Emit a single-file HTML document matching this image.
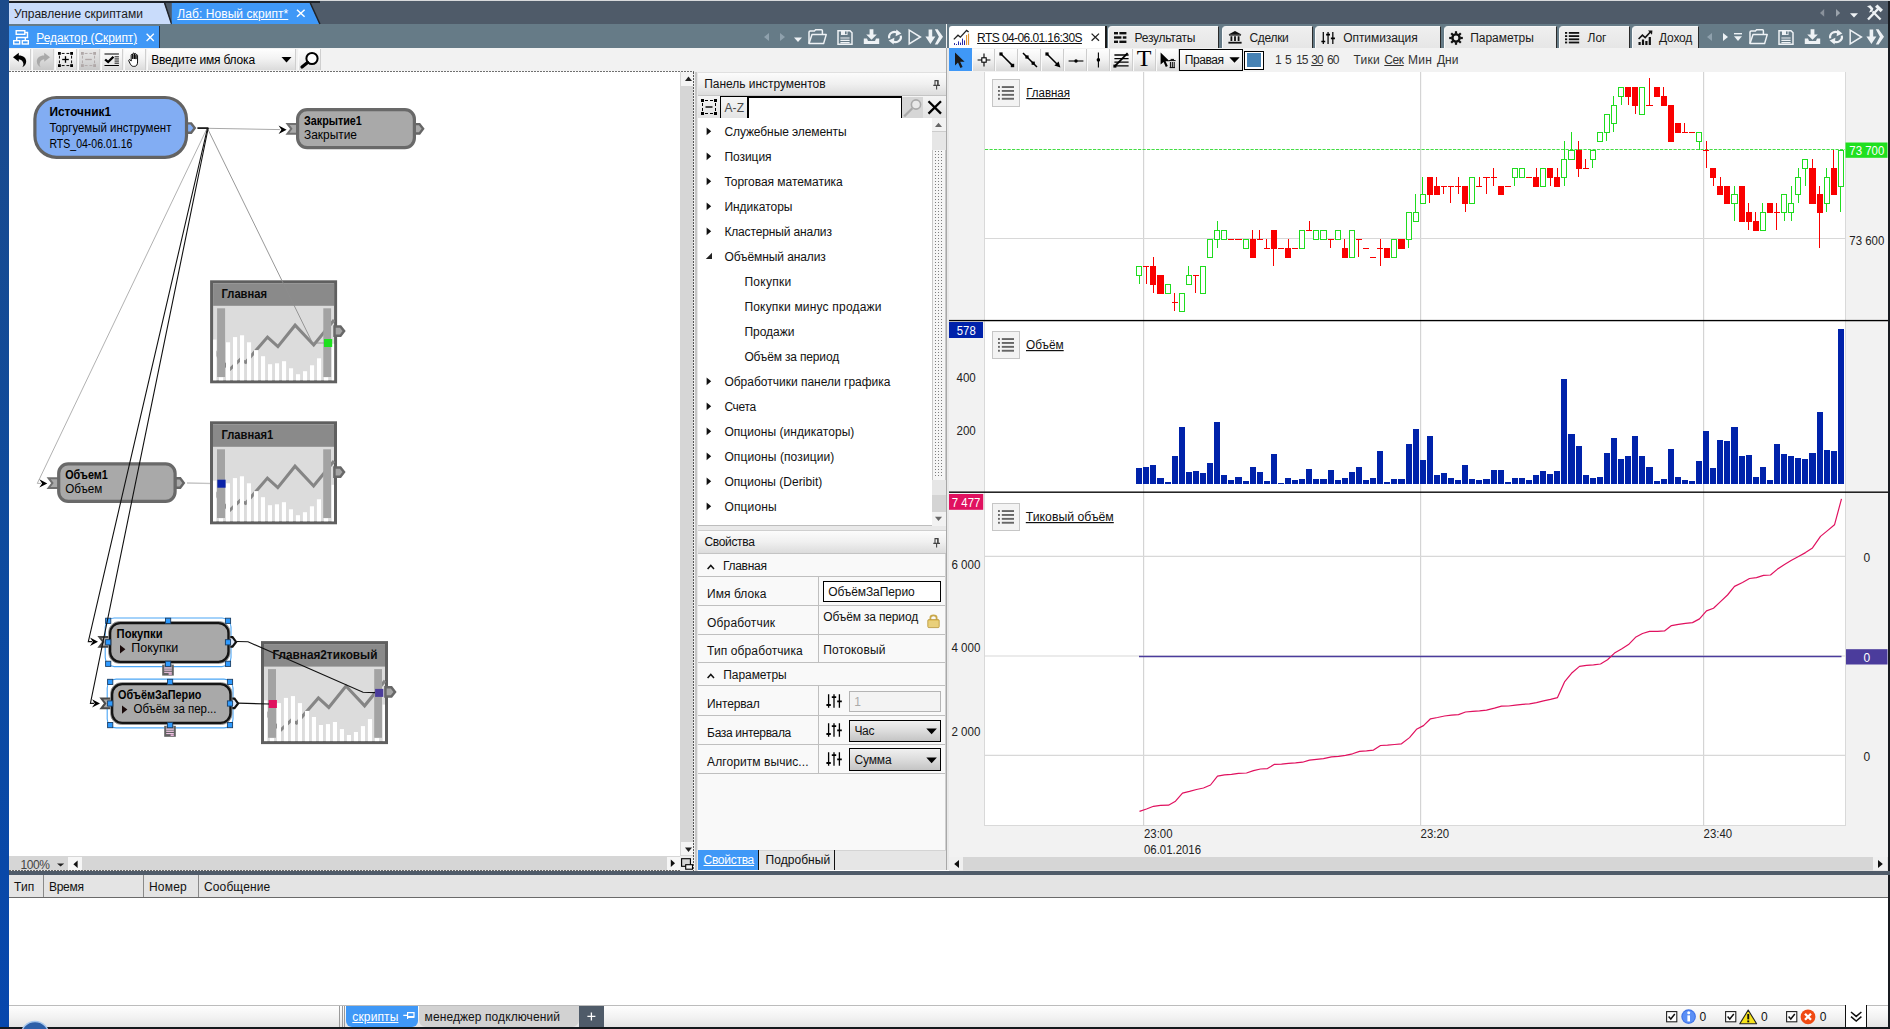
<!DOCTYPE html>
<html lang="ru"><head><meta charset="utf-8"><title>Лаб: Новый скрипт</title>
<style>
*{box-sizing:border-box;margin:0;padding:0}
html,body{width:1890px;height:1029px;overflow:hidden;background:#fff}
body{position:relative;font-family:"Liberation Sans",sans-serif;font-size:12px;color:#000}
div{position:absolute}
svg{position:absolute;overflow:visible}
svg text{font-family:"Liberation Sans",sans-serif}
.t{white-space:pre}
</style></head>
<body>
<div style="left:0px;top:0px;width:9px;height:1029px;background:linear-gradient(#1c4b8b,#0c4aa0 60%,#0747ad)"></div>
<div style="left:9px;top:0px;width:1881px;height:24px;background:#4f5b69"></div>
<div style="left:9px;top:0px;width:1881px;height:1px;background:#d8dadc"></div>
<div style="left:9px;top:1px;width:311px;height:2px;background:#1e2228"></div>
<div style="left:9px;top:24px;width:1881px;height:24px;background:#667b87"></div>
<div style="left:9px;top:48px;width:1881px;height:24px;background:#f2f2f2"></div>
<svg style="left:0;top:0" width="400" height="30"><polygon points="9,3 164.3,3 171.3,24 9,24" fill="#c9dcfb"/><path d="M164.6 3 L171.6 24" stroke="#20242a" stroke-width="1.5"/><polygon points="171.8,3 310,3 319.6,24 171.8,24" fill="#3f98f7"/><path d="M310.3 3 L319.9 24" stroke="#20242a" stroke-width="1.5"/></svg>
<div class="t" style="left:14px;top:7px;line-height:14px;height:14px;color:#1a1a1a;letter-spacing:0.042px;">Управление скриптами</div>
<div class="t" style="left:177.3px;top:7px;line-height:14px;height:14px;color:#fff;text-decoration:underline;letter-spacing:0.069px;">Лаб: Новый скрипт*</div>
<svg style="left:296px;top:9px" width="10" height="9"><path d="M1 0.8 L8.6 7.8 M8.6 0.8 L1 7.8" stroke="#fff" stroke-width="1.5" fill="none"/></svg>
<div style="left:9px;top:25.7px;width:151px;height:22.3px;background:#3f98f7;border-right:1px solid #2a3340"></div>
<svg style="left:13px;top:30px" width="16" height="15"><rect x="3.2" y="0.7" width="8.6" height="3.6" fill="none" stroke="#fff" stroke-width="1.4"/><rect x="0.7" y="10.7" width="6" height="3.3" fill="none" stroke="#fff" stroke-width="1.4"/><rect x="9.3" y="10.7" width="6" height="3.3" fill="none" stroke="#fff" stroke-width="1.4"/><path d="M12 2.5 H14.5 V7.5 H3.7 V10.5 M12.3 7.5 V10.5" stroke="#fff" stroke-width="1.4" fill="none"/></svg>
<div class="t" style="left:36.3px;top:31px;line-height:14px;height:14px;color:#fff;text-decoration:underline;letter-spacing:-0.081px;">Редактор (Скрипт)</div>
<svg style="left:146px;top:33px" width="9" height="9"><path d="M0.6 0.8 L7.8 8 M7.8 0.8 L0.6 8" stroke="#fff" stroke-width="1.3" fill="none"/></svg>
<div style="left:9px;top:49px;width:22px;height:21px;background:linear-gradient(#fefefe,#f3f3f3 45%,#dbdbdb);border-right:1px solid #cfcfcf;border-left:1px solid #fafafa"></div>
<div style="left:32px;top:49px;width:22px;height:21px;background:linear-gradient(#e8e8e8,#dcdcdc 45%,#c8c8c8);border-right:1px solid #cfcfcf;border-left:1px solid #fafafa"></div>
<div style="left:55px;top:49px;width:22px;height:21px;background:linear-gradient(#fefefe,#f3f3f3 45%,#dbdbdb);border-right:1px solid #cfcfcf;border-left:1px solid #fafafa"></div>
<div style="left:78px;top:49px;width:22px;height:21px;background:linear-gradient(#e8e8e8,#dcdcdc 45%,#c8c8c8);border-right:1px solid #cfcfcf;border-left:1px solid #fafafa"></div>
<div style="left:101px;top:49px;width:22px;height:21px;background:linear-gradient(#fefefe,#f3f3f3 45%,#dbdbdb);border-right:1px solid #cfcfcf;border-left:1px solid #fafafa"></div>
<div style="left:124px;top:49px;width:22px;height:21px;background:linear-gradient(#fefefe,#f3f3f3 45%,#dbdbdb);border-right:1px solid #cfcfcf;border-left:1px solid #fafafa"></div>
<div style="left:147px;top:49px;width:149px;height:21px;background:linear-gradient(#fefefe,#f3f3f3 45%,#dbdbdb);border-right:1px solid #cfcfcf;border-left:1px solid #fafafa"></div>
<div style="left:298px;top:49px;width:23px;height:21px;background:linear-gradient(#fefefe,#f3f3f3 45%,#dbdbdb);border-right:1px solid #cfcfcf;border-left:1px solid #fafafa"></div>
<div style="left:9px;top:71px;width:685px;height:1px;background:repeating-linear-gradient(90deg,#707070 0 2px,#fafafa 2px 3px)"></div>
<svg style="left:12px;top:52px" width="16" height="16" viewBox="0 0 16 16"><path d="M1 5.2 L6.8 0.8 V3.6 C11.5 3.6 14.2 6.2 14.2 9.6 C14.2 12.2 12.6 14.2 10.2 15.2 C11.3 13.8 11.6 12.6 11.3 11.2 C10.8 9 9.2 7.4 6.8 7.2 V9.8 Z" fill="#000"/></svg>
<svg style="left:35px;top:52px" width="16" height="16" viewBox="0 0 16 16"><path d="M15 5.2 L9.2 0.8 V3.6 C4.5 3.6 1.8 6.2 1.8 9.6 C1.8 12.2 3.4 14.2 5.8 15.2 C4.7 13.8 4.4 12.6 4.7 11.2 C5.2 9 6.8 7.4 9.2 7.2 V9.8 Z" fill="#a9a9a9"/></svg>
<svg style="left:58px;top:52px" width="15" height="15" viewBox="0 0 16 16" fill="#000"><rect x="0" y="0" width="3" height="3"/><rect x="13" y="0" width="3" height="3"/><rect x="0" y="13" width="3" height="3"/><rect x="13" y="13" width="3" height="3"/><rect x="4" y="1" width="3" height="1"/><rect x="9" y="1" width="3" height="1"/><rect x="4" y="14" width="3" height="1"/><rect x="9" y="14" width="3" height="1"/><rect x="1" y="4" width="1" height="3"/><rect x="1" y="9" width="1" height="3"/><rect x="14" y="4" width="1" height="3"/><rect x="14" y="9" width="1" height="3"/><rect x="4.5" y="7.3" width="7" height="1.4"/><rect x="7.3" y="4.5" width="1.4" height="7"/></svg>
<svg style="left:81px;top:52px" width="15" height="15" viewBox="0 0 16 16" fill="#b0a8a8"><rect x="0" y="0" width="3" height="3"/><rect x="13" y="0" width="3" height="3"/><rect x="0" y="13" width="3" height="3"/><rect x="13" y="13" width="3" height="3"/><rect x="4" y="1" width="3" height="1"/><rect x="9" y="1" width="3" height="1"/><rect x="4" y="14" width="3" height="1"/><rect x="9" y="14" width="3" height="1"/><rect x="1" y="4" width="1" height="3"/><rect x="1" y="9" width="1" height="3"/><rect x="14" y="4" width="1" height="3"/><rect x="14" y="9" width="1" height="3"/><rect x="4.5" y="7.3" width="7" height="1.4"/></svg>
<svg style="left:104px;top:52.8px" width="15.4" height="13.6" viewBox="0 0 16 16" preserveAspectRatio="none"><path d="M0.5 1.2 H15.5 M0.5 14.8 H15.5" stroke="#000" stroke-width="1.2"/><path d="M11 4.5 H15.5 M11 7 H15.5 M11 9.5 H15.5 M11 12 H15.5" stroke="#000" stroke-width="1"/><path d="M1.2 7.6 L4.3 10.6 L9.8 4.4" stroke="#000" stroke-width="2.4" fill="none"/></svg>
<svg style="left:128.4px;top:52.2px" width="12.4" height="15.6" viewBox="0 0 14 18" preserveAspectRatio="none"><path d="M3.6 10.5 V3.6 C3.6 2.4 5.4 2.4 5.4 3.6 V8 V2.2 C5.4 1 7.2 1 7.2 2.2 V8 V2.6 C7.2 1.4 9 1.4 9 2.6 V8.2 V4 C9 2.8 10.8 2.8 10.8 4 V11.5 C10.8 14.5 9.8 16.6 7 16.6 H6.2 C4.4 16.6 3.4 15.4 2.4 13.4 L0.9 10.2 C0.4 9 2 8.2 2.7 9.3 Z" fill="#fff" stroke="#000" stroke-width="1.1" stroke-linejoin="round"/></svg>
<div class="t" style="left:151.2px;top:53px;line-height:14px;height:14px;letter-spacing:-0.186px;">Введите имя блока</div>
<svg style="left:281px;top:56px" width="12" height="8"><polygon points="0.5,1 10.5,1 5.5,6.5" fill="#000"/></svg>
<svg style="left:300px;top:51px" width="20" height="18" viewBox="0 0 20 18"><circle cx="12" cy="7.5" r="5.6" fill="#fff" stroke="#000" stroke-width="2"/><path d="M7.6 11.4 L2 16" stroke="#000" stroke-width="3.2" stroke-linecap="round"/></svg>
<svg style="left:0;top:0" width="700" height="880" viewBox="0 0 700 880">
<path d="M208 128.3 L280 129.6" stroke="#a8a8a8" stroke-width="1" fill="none"/>
<path d="M207 128.5 L37.3 483.4 L41 483.4" stroke="#a8a8a8" stroke-width="0.9" fill="none"/>
<path d="M187 483 L218 483.6" stroke="#c4c4c4" stroke-width="1.4" fill="none"/>
<polygon points="186.2,123.4 191.2,123.4 194.79999999999998,128.1 191.2,132.8 186.2,132.8" fill="#82adf3" stroke="#666" stroke-width="2.4" stroke-linejoin="miter"/>
<rect x="34.90" y="97.50" width="151.60" height="59.80" rx="21.5" ry="21.5" fill="#82adf3" stroke="#636363" stroke-width="3.2"/>
<text x="49.4" y="116" font-size="12" fill="#000" font-weight="bold" textLength="61.6" lengthAdjust="spacingAndGlyphs">Источник1</text>
<text x="49.4" y="132" font-size="12" fill="#000" textLength="122" lengthAdjust="spacingAndGlyphs">Торгуемый инструмент</text>
<text x="49.4" y="148" font-size="12" fill="#000" textLength="83" lengthAdjust="spacingAndGlyphs">RTS_04-06.01.16</text>
<polygon points="286.6,129.7 278.6,125.49999999999999 281.40000000000003,129.7 278.6,133.89999999999998" fill="#000"/>
<polygon points="287.5,123.9 297.9,123.9 297.9,133.70000000000002 287.5,133.70000000000002 291.29999999999995,128.8" fill="#a9a9a9" stroke="#707070" stroke-width="2" stroke-linejoin="miter"/>
<polygon points="414.5,124.10000000000001 419.5,124.10000000000001 423.1,128.8 419.5,133.50000000000003 414.5,133.50000000000003" fill="#a9a9a9" stroke="#666" stroke-width="2.4" stroke-linejoin="miter"/>
<rect x="297.60" y="109.60" width="116.80" height="38.00" rx="9.5" ry="9.5" fill="#a9a9a9" stroke="#696969" stroke-width="3.2"/>
<text x="304" y="125" font-size="12" fill="#000" font-weight="bold" textLength="57.8" lengthAdjust="spacingAndGlyphs">Закрытие1</text>
<text x="304" y="139" font-size="12" fill="#000" textLength="53" lengthAdjust="spacingAndGlyphs">Закрытие</text>
<g transform="translate(210.1,280.3)"><rect x="1.5" y="1.5" width="124" height="100" fill="#dcdcdc" stroke="#5f5f5f" stroke-width="3"/><rect x="3" y="3" width="121" height="22.5" fill="#8a8a8a"/><polyline points="5,71 8,76 19.2,89.5 30.1,79.3 35.6,82 57.4,56.8 67.8,66.3 85,44.9 103.6,64.7 124,39.6" fill="none" stroke="#858585" stroke-width="3.1" stroke-linejoin="miter"/><g fill="#fff"><rect x="3" y="59.3" width="3.4" height="40.7"/><rect x="15.9" y="62" width="4.1" height="38.0"/><rect x="22.9" y="56.8" width="4.1" height="43.2"/><rect x="29.9" y="55" width="4.1" height="45.0"/><rect x="36.9" y="62" width="4.1" height="38.0"/><rect x="43.9" y="69.8" width="4.1" height="30.2"/><rect x="50.9" y="75.9" width="4.1" height="24.1"/><rect x="57.9" y="83.9" width="4.1" height="16.1"/><rect x="64.9" y="83" width="4.1" height="17.0"/><rect x="71.9" y="80.9" width="4.1" height="19.1"/><rect x="78.9" y="88" width="4.1" height="12.0"/><rect x="85.9" y="93.9" width="4.1" height="6.1"/><rect x="92.9" y="90.9" width="4.1" height="9.1"/><rect x="99.9" y="85" width="4.1" height="15.0"/><rect x="106.9" y="78" width="4.1" height="22.0"/><rect x="8.9" y="97" width="4.2" height="3"/><rect x="113.9" y="97" width="4.2" height="3"/><rect x="121.6" y="63.5" width="2.4" height="36.5"/></g><rect x="7" y="28" width="8" height="68.7" fill="#a3a3a3"/><rect x="113.2" y="28" width="7.8" height="68.7" fill="#a3a3a3"/><rect x="113.9" y="58.7" width="8.2" height="8" fill="#1fe01f"/><polygon points="124.4,46.15 130.4,46.15 134.0,50.8 130.4,55.45 124.4,55.45" fill="#a4a4a4" stroke="#686868" stroke-width="2.5" stroke-linejoin="miter"/></g><text x="221.5" y="298" font-size="12" fill="#0a0a0a" font-weight="bold" textLength="45.5" lengthAdjust="spacingAndGlyphs">Главная</text>
<path d="M207.5 128.5 L312.5 343 L324 343" stroke="#8c8c8c" stroke-width="0.9" fill="none"/>
<polygon points="47.3,483.4 39.3,479.2 42.099999999999994,483.4 39.3,487.59999999999997" fill="#000"/>
<polygon points="48.6,478.2 59,478.2 59,488.0 48.6,488.0 52.4,483.09999999999997" fill="#a9a9a9" stroke="#707070" stroke-width="2" stroke-linejoin="miter"/>
<polygon points="175.2,478.3 180.2,478.3 183.79999999999998,483.0 180.2,487.70000000000005 175.2,487.70000000000005" fill="#a9a9a9" stroke="#666" stroke-width="2.4" stroke-linejoin="miter"/>
<rect x="58.70" y="463.80" width="116.40" height="37.50" rx="9.5" ry="9.5" fill="#a9a9a9" stroke="#696969" stroke-width="3.2"/>
<text x="65.2" y="479" font-size="12" fill="#000" font-weight="bold" textLength="42.6" lengthAdjust="spacingAndGlyphs">Объем1</text>
<text x="65.2" y="493" font-size="12" fill="#000" textLength="37.2" lengthAdjust="spacingAndGlyphs">Объем</text>
<g transform="translate(210.0,421.3)"><rect x="1.5" y="1.5" width="124" height="100" fill="#dcdcdc" stroke="#5f5f5f" stroke-width="3"/><rect x="3" y="3" width="121" height="22.5" fill="#8a8a8a"/><polyline points="5,71 8,76 19.2,89.5 30.1,79.3 35.6,82 57.4,56.8 67.8,66.3 85,44.9 103.6,64.7 124,39.6" fill="none" stroke="#858585" stroke-width="3.1" stroke-linejoin="miter"/><g fill="#fff"><rect x="3" y="59.3" width="3.4" height="40.7"/><rect x="15.9" y="62" width="4.1" height="38.0"/><rect x="22.9" y="56.8" width="4.1" height="43.2"/><rect x="29.9" y="55" width="4.1" height="45.0"/><rect x="36.9" y="62" width="4.1" height="38.0"/><rect x="43.9" y="69.8" width="4.1" height="30.2"/><rect x="50.9" y="75.9" width="4.1" height="24.1"/><rect x="57.9" y="83.9" width="4.1" height="16.1"/><rect x="64.9" y="83" width="4.1" height="17.0"/><rect x="71.9" y="80.9" width="4.1" height="19.1"/><rect x="78.9" y="88" width="4.1" height="12.0"/><rect x="85.9" y="93.9" width="4.1" height="6.1"/><rect x="92.9" y="90.9" width="4.1" height="9.1"/><rect x="99.9" y="85" width="4.1" height="15.0"/><rect x="106.9" y="78" width="4.1" height="22.0"/><rect x="8.9" y="97" width="4.2" height="3"/><rect x="113.9" y="97" width="4.2" height="3"/><rect x="121.6" y="63.5" width="2.4" height="36.5"/></g><rect x="7" y="28" width="8" height="68.7" fill="#a3a3a3"/><rect x="113.2" y="28" width="7.8" height="68.7" fill="#a3a3a3"/><rect x="7.4" y="58.4" width="8.2" height="8" fill="#0a22a8"/><polygon points="124.4,46.15 130.4,46.15 134.0,50.8 130.4,55.45 124.4,55.45" fill="#a4a4a4" stroke="#686868" stroke-width="2.5" stroke-linejoin="miter"/></g><text x="221.4" y="439" font-size="12" fill="#0a0a0a" font-weight="bold" textLength="51.8" lengthAdjust="spacingAndGlyphs">Главная1</text>
<g transform="translate(261,641.1)"><rect x="1.5" y="1.5" width="124" height="100" fill="#dcdcdc" stroke="#5f5f5f" stroke-width="3"/><rect x="3" y="3" width="121" height="22.5" fill="#8a8a8a"/><polyline points="5,71 8,76 19.2,89.5 30.1,79.3 35.6,82 57.4,56.8 67.8,66.3 85,44.9 103.6,64.7 124,39.6" fill="none" stroke="#858585" stroke-width="3.1" stroke-linejoin="miter"/><g fill="#fff"><rect x="3" y="59.3" width="3.4" height="40.7"/><rect x="15.9" y="62" width="4.1" height="38.0"/><rect x="22.9" y="56.8" width="4.1" height="43.2"/><rect x="29.9" y="55" width="4.1" height="45.0"/><rect x="36.9" y="62" width="4.1" height="38.0"/><rect x="43.9" y="69.8" width="4.1" height="30.2"/><rect x="50.9" y="75.9" width="4.1" height="24.1"/><rect x="57.9" y="83.9" width="4.1" height="16.1"/><rect x="64.9" y="83" width="4.1" height="17.0"/><rect x="71.9" y="80.9" width="4.1" height="19.1"/><rect x="78.9" y="88" width="4.1" height="12.0"/><rect x="85.9" y="93.9" width="4.1" height="6.1"/><rect x="92.9" y="90.9" width="4.1" height="9.1"/><rect x="99.9" y="85" width="4.1" height="15.0"/><rect x="106.9" y="78" width="4.1" height="22.0"/><rect x="8.9" y="97" width="4.2" height="3"/><rect x="113.9" y="97" width="4.2" height="3"/><rect x="121.6" y="63.5" width="2.4" height="36.5"/></g><rect x="7" y="28" width="8" height="68.7" fill="#a3a3a3"/><rect x="113.2" y="28" width="7.8" height="68.7" fill="#a3a3a3"/><rect x="7.7" y="58.9" width="8.2" height="8" fill="#e0115f"/><rect x="114.1" y="47.8" width="8.2" height="8" fill="#4b3c9c"/><polygon points="124.4,46.15 130.4,46.15 134.0,50.8 130.4,55.45 124.4,55.45" fill="#a4a4a4" stroke="#686868" stroke-width="2.5" stroke-linejoin="miter"/></g><text x="272.4" y="659" font-size="12" fill="#0a0a0a" font-weight="bold" textLength="105" lengthAdjust="spacingAndGlyphs">Главная2тиковый</text>
<path d="M237 641.5 L248 641.8 L363 692.3 L375 692.6" stroke="#111" stroke-width="1.1" fill="none"/>
<path d="M238 703.2 L269 704" stroke="#111" stroke-width="1.2" fill="none"/>
<rect x="105.2" y="618.0" width="125.8" height="48.6" rx="9" ry="9" fill="none" stroke="#4aa5f5" stroke-width="1.1"/>
<polygon points="98,641.8 90,637.5999999999999 92.8,641.8 90,646.0" fill="#000"/>
<polygon points="99.39999999999999,637.0 109.8,637.0 109.8,646.8 99.39999999999999,646.8 103.2,641.9" fill="#a9a9a9" stroke="#4a4a4a" stroke-width="2" stroke-linejoin="miter"/>
<polygon points="227.5,637.1 232.5,637.1 236.1,641.9 232.5,646.6999999999999 227.5,646.6999999999999" fill="#dfe8f8" stroke="#111" stroke-width="2.2" stroke-linejoin="miter"/>
<rect x="108.70" y="621.60" width="121.20" height="41.70" rx="10.5" ry="10.5" fill="#a9a9a9" stroke="#8e8e8e" stroke-width="1"/>
<rect x="110.15" y="623.05" width="118.30" height="38.80" rx="10" ry="10" fill="#a9a9a9" stroke="#141414" stroke-width="2.3"/>
<text x="116.6" y="638" font-size="12" fill="#000" font-weight="bold" textLength="46" lengthAdjust="spacingAndGlyphs">Покупки</text>
<polygon points="120,645 125.4,649.2 120,653.4" fill="#1a0a0a"/>
<text x="131.3" y="652" font-size="12" fill="#000" textLength="47" lengthAdjust="spacingAndGlyphs">Покупки</text>
<g transform="translate(162.2,664.6)"><rect x="0" y="0" width="11.6" height="11" fill="#626262"/><rect x="1.8" y="0" width="8" height="5" fill="#8a8a8a"/><rect x="2" y="2.8" width="7.6" height="1.1" fill="#f0c4e4"/><rect x="2" y="5" width="7.6" height="1.1" fill="#f0c4e4"/><rect x="2" y="7.2" width="7.6" height="1.1" fill="#f0c4e4"/><rect x="6.4" y="8.6" width="3.2" height="1.6" fill="#e9b4dc"/></g>
<rect x="105.6" y="618.2" width="5.2" height="5.2" fill="#2e9afe" stroke="#1b3f66" stroke-width="0.9"/><rect x="165.5" y="618.2" width="5.2" height="5.2" fill="#2e9afe" stroke="#1b3f66" stroke-width="0.9"/><rect x="225.4" y="618.2" width="5.2" height="5.2" fill="#2e9afe" stroke="#1b3f66" stroke-width="0.9"/><rect x="105.6" y="639.7" width="5.2" height="5.2" fill="#2e9afe" stroke="#1b3f66" stroke-width="0.9"/><rect x="225.4" y="639.7" width="5.2" height="5.2" fill="#2e9afe" stroke="#1b3f66" stroke-width="0.9"/><rect x="105.6" y="661.2" width="5.2" height="5.2" fill="#2e9afe" stroke="#1b3f66" stroke-width="0.9"/><rect x="165.5" y="661.2" width="5.2" height="5.2" fill="#2e9afe" stroke="#1b3f66" stroke-width="0.9"/><rect x="225.4" y="661.2" width="5.2" height="5.2" fill="#2e9afe" stroke="#1b3f66" stroke-width="0.9"/>
<rect x="107.2" y="679.1" width="125.8" height="48.80000000000005" rx="9" ry="9" fill="none" stroke="#4aa5f5" stroke-width="1.1"/>
<polygon points="100,703.4 92,699.1999999999999 94.8,703.4 92,707.6" fill="#000"/>
<polygon points="101.39999999999999,698.5 111.8,698.5 111.8,708.3 101.39999999999999,708.3 105.2,703.4" fill="#a9a9a9" stroke="#4a4a4a" stroke-width="2" stroke-linejoin="miter"/>
<polygon points="229.5,698.6 234.5,698.6 238.1,703.4 234.5,708.1999999999999 229.5,708.1999999999999" fill="#dfe8f8" stroke="#111" stroke-width="2.2" stroke-linejoin="miter"/>
<rect x="110.70" y="682.70" width="121.20" height="41.70" rx="10.5" ry="10.5" fill="#a9a9a9" stroke="#8e8e8e" stroke-width="1"/>
<rect x="112.15" y="684.15" width="118.30" height="38.80" rx="10" ry="10" fill="#a9a9a9" stroke="#141414" stroke-width="2.3"/>
<text x="118" y="699" font-size="12" fill="#000" font-weight="bold" textLength="83.5" lengthAdjust="spacingAndGlyphs">ОбъёмЗаПерио</text>
<polygon points="122,705.4 127.4,709.6 122,713.8" fill="#1a0a0a"/>
<text x="133.5" y="713" font-size="12" fill="#000" textLength="83" lengthAdjust="spacingAndGlyphs">Объём за пер...</text>
<g transform="translate(164.2,725.8)"><rect x="0" y="0" width="11.6" height="11" fill="#626262"/><rect x="1.8" y="0" width="8" height="5" fill="#8a8a8a"/><rect x="2" y="2.8" width="7.6" height="1.1" fill="#f0c4e4"/><rect x="2" y="5" width="7.6" height="1.1" fill="#f0c4e4"/><rect x="2" y="7.2" width="7.6" height="1.1" fill="#f0c4e4"/><rect x="6.4" y="8.6" width="3.2" height="1.6" fill="#e9b4dc"/></g>
<rect x="107.6" y="679.3" width="5.2" height="5.2" fill="#2e9afe" stroke="#1b3f66" stroke-width="0.9"/><rect x="167.5" y="679.3" width="5.2" height="5.2" fill="#2e9afe" stroke="#1b3f66" stroke-width="0.9"/><rect x="227.4" y="679.3" width="5.2" height="5.2" fill="#2e9afe" stroke="#1b3f66" stroke-width="0.9"/><rect x="107.6" y="700.9" width="5.2" height="5.2" fill="#2e9afe" stroke="#1b3f66" stroke-width="0.9"/><rect x="227.4" y="700.9" width="5.2" height="5.2" fill="#2e9afe" stroke="#1b3f66" stroke-width="0.9"/><rect x="107.6" y="722.5" width="5.2" height="5.2" fill="#2e9afe" stroke="#1b3f66" stroke-width="0.9"/><rect x="167.5" y="722.5" width="5.2" height="5.2" fill="#2e9afe" stroke="#1b3f66" stroke-width="0.9"/><rect x="227.4" y="722.5" width="5.2" height="5.2" fill="#2e9afe" stroke="#1b3f66" stroke-width="0.9"/>
<path d="M207.5 128 L88.3 641.6 L92 641.6" stroke="#111" stroke-width="1.1" fill="none"/>
<path d="M208.2 128 L90.4 703.4 L94 703.4" stroke="#111" stroke-width="1.1" fill="none"/>
<path d="M197.4 128.1 H208.4" stroke="#111" stroke-width="1.7" fill="none"/>
</svg>
<div style="left:680.2px;top:72px;width:12.8px;height:784px;background:#d6d6d6"></div>
<div style="left:680.7px;top:72px;width:12.3px;height:14px;background:#f4f4f4"></div>
<svg style="left:684.6px;top:76px" width="8" height="6"><polygon points="0,5 7,5 3.5,0.5" fill="#222"/></svg>
<div style="left:680.7px;top:842px;width:12.3px;height:13px;background:#f4f4f4"></div>
<svg style="left:684.6px;top:846.5px" width="8" height="6"><polygon points="0,0.5 7,0.5 3.5,5" fill="#222"/></svg>
<div style="left:9px;top:856px;width:685px;height:15px;background:#d6d6d6"></div>
<div class="t" style="left:20.6px;top:858px;line-height:14px;height:14px;color:#444;letter-spacing:-0.426px;">100%</div>
<svg style="left:56.8px;top:862.6px" width="8" height="5"><polygon points="0,0.4 7.2,0.4 3.6,3.5" fill="#222"/></svg>
<div style="left:68px;top:857px;width:13.5px;height:13px;background:#f6f6f6"></div>
<svg style="left:72.6px;top:859.8px" width="6" height="9"><polygon points="4.6,0.4 4.6,8 0.4,4.2" fill="#111"/></svg>
<div style="left:666.5px;top:857px;width:13px;height:13px;background:#f6f6f6"></div>
<svg style="left:670px;top:859px" width="6" height="9"><polygon points="0.8,0.5 0.8,8 5,4.2" fill="#111"/></svg>
<div style="left:9px;top:870.2px;width:685px;height:0.9px;background:repeating-linear-gradient(90deg,#666 0 2px,#e8e8e8 2px 3px)"></div>
<svg style="left:681px;top:858px" width="13" height="13"><rect x="0.6" y="0.7" width="8.8" height="7.6" fill="#d6d6d6" stroke="#000" stroke-width="1.1"/><rect x="4.7" y="6.7" width="6.8" height="4.5" fill="#f4f4f4" stroke="#000" stroke-width="1.1"/></svg>
<div style="left:680.2px;top:856px;width:13px;height:15px;background:#ececec"></div>
<svg style="left:681px;top:858px" width="13" height="13"><rect x="0.6" y="0.7" width="8.8" height="7.6" fill="#d6d6d6" stroke="#000" stroke-width="1.1"/><rect x="4.7" y="6.7" width="6.8" height="4.5" fill="#f4f4f4" stroke="#000" stroke-width="1.1"/></svg>
<div style="left:693px;top:72px;width:1.1px;height:799px;background:repeating-linear-gradient(180deg,#555 0 2px,#eee 2px 3px)"></div>
<div style="left:694.1px;top:72px;width:3.9px;height:799px;background:linear-gradient(90deg,#f0f0f0 0 1.2px,#c6c6c6 1.2px 3px,#e8e8e8 3px)"></div>
<div style="left:698px;top:72px;width:248px;height:798px;background:#e9e9e9"></div>
<div style="left:698px;top:72px;width:248px;height:24px;background:linear-gradient(#fcfcfc,#f0f0f0 50%,#dcdcdc);border-top:1px solid #e0e0e0;border-bottom:1px solid #c4c4c4"></div>
<div class="t" style="left:704.2px;top:77px;line-height:14px;height:14px;color:#111;letter-spacing:-0.036px;">Панель инструментов</div>
<svg style="left:933px;top:79.5px" width="8" height="10"><path d="M1.5 0.6 H5.6 M2 0.6 V5.2 M5 0.6 V5.2 M0.3 5.4 H7 M3.6 5.4 V9.6" stroke="#444" stroke-width="1.1" fill="none"/><rect x="4.2" y="0.6" width="1.2" height="4.8" fill="#444"/></svg>
<div style="left:698px;top:96px;width:248px;height:22px;background:linear-gradient(#f4f4f4,#e2e2e2)"></div>
<svg style="left:701px;top:99px" width="16" height="16" viewBox="0 0 16 16" fill="#000"><rect x="0" y="0" width="3" height="3"/><rect x="13" y="0" width="3" height="3"/><rect x="0" y="13" width="3" height="3"/><rect x="13" y="13" width="3" height="3"/><rect x="4" y="1" width="3" height="1"/><rect x="9" y="1" width="3" height="1"/><rect x="4" y="14" width="3" height="1"/><rect x="9" y="14" width="3" height="1"/><rect x="1" y="4" width="1" height="3"/><rect x="1" y="9" width="1" height="3"/><rect x="14" y="4" width="1" height="3"/><rect x="14" y="9" width="1" height="3"/><rect x="4.5" y="7.3" width="7" height="1.4"/></svg>
<div style="left:720px;top:96px;width:28px;height:22px;background:linear-gradient(#f6f6f6,#e4e4e4);border-left:1.5px solid #000;border-top:1.5px solid #000;border-right:1px solid #bbb"></div>
<div class="t" style="left:724.4px;top:101px;line-height:14px;height:14px;color:#4a4a4a;letter-spacing:0.119px;">A-Z</div>
<div style="left:747px;top:96px;width:155px;height:22px;background:#fff;border-left:2px solid #000;border-top:2px solid #000;border-right:1.5px solid #000"></div>
<div style="left:902px;top:97px;width:21px;height:21px;background:#d6d6d6"></div>
<svg style="left:903px;top:98px" width="20" height="20" viewBox="0 0 20 20"><circle cx="13" cy="6.5" r="4.6" fill="#e9e9e9" stroke="#aaa" stroke-width="1.6"/><path d="M9.4 10.2 L1.2 18.4" stroke="#aaa" stroke-width="2.2"/></svg>
<svg style="left:927px;top:100px" width="16" height="15"><path d="M1.5 1.2 L14 13.6 M14 1.2 L1.5 13.6" stroke="#000" stroke-width="2.3" fill="none"/></svg>
<div style="left:698px;top:118px;width:248px;height:408px;background:#fff;border-bottom:1px solid #bdbdbd;border-right:1px solid #d0d0d0"></div>
<div class="t" style="left:724.4px;top:125px;line-height:14px;height:14px;color:#111;letter-spacing:-0.090px;">Служебные элементы</div>
<svg style="left:706px;top:127.1px" width="6" height="9"><polygon points="0.6,0.4 5.2,4.3 0.6,8.2" fill="#111"/></svg>
<div class="t" style="left:724.4px;top:150px;line-height:14px;height:14px;color:#111;letter-spacing:-0.036px;">Позиция</div>
<svg style="left:706px;top:152.1px" width="6" height="9"><polygon points="0.6,0.4 5.2,4.3 0.6,8.2" fill="#111"/></svg>
<div class="t" style="left:724.4px;top:175px;line-height:14px;height:14px;color:#111;letter-spacing:-0.038px;">Торговая математика</div>
<svg style="left:706px;top:177.1px" width="6" height="9"><polygon points="0.6,0.4 5.2,4.3 0.6,8.2" fill="#111"/></svg>
<div class="t" style="left:724.4px;top:200px;line-height:14px;height:14px;color:#111;letter-spacing:-0.012px;">Индикаторы</div>
<svg style="left:706px;top:202.1px" width="6" height="9"><polygon points="0.6,0.4 5.2,4.3 0.6,8.2" fill="#111"/></svg>
<div class="t" style="left:724.4px;top:225px;line-height:14px;height:14px;color:#111;letter-spacing:-0.145px;">Кластерный анализ</div>
<svg style="left:706px;top:227.1px" width="6" height="9"><polygon points="0.6,0.4 5.2,4.3 0.6,8.2" fill="#111"/></svg>
<div class="t" style="left:724.4px;top:250px;line-height:14px;height:14px;color:#111;letter-spacing:-0.087px;">Объёмный анализ</div>
<svg style="left:705px;top:251.5px" width="8" height="8"><polygon points="7,0.8 7,7 0.8,7" fill="#222"/></svg>
<div class="t" style="left:744.4px;top:275px;line-height:14px;height:14px;color:#111;letter-spacing:0.294px;">Покупки</div>
<div class="t" style="left:744.4px;top:300px;line-height:14px;height:14px;color:#111;letter-spacing:0.193px;">Покупки минус продажи</div>
<div class="t" style="left:744.4px;top:325px;line-height:14px;height:14px;color:#111;letter-spacing:-0.018px;">Продажи</div>
<div class="t" style="left:744.4px;top:350px;line-height:14px;height:14px;color:#111;letter-spacing:-0.163px;">Объём за период</div>
<div class="t" style="left:724.4px;top:375px;line-height:14px;height:14px;color:#111;letter-spacing:-0.003px;">Обработчики панели графика</div>
<svg style="left:706px;top:377.1px" width="6" height="9"><polygon points="0.6,0.4 5.2,4.3 0.6,8.2" fill="#111"/></svg>
<div class="t" style="left:724.4px;top:400px;line-height:14px;height:14px;color:#111;letter-spacing:-0.339px;">Счета</div>
<svg style="left:706px;top:402.1px" width="6" height="9"><polygon points="0.6,0.4 5.2,4.3 0.6,8.2" fill="#111"/></svg>
<div class="t" style="left:724.4px;top:425px;line-height:14px;height:14px;color:#111;letter-spacing:0.052px;">Опционы (индикаторы)</div>
<svg style="left:706px;top:427.1px" width="6" height="9"><polygon points="0.6,0.4 5.2,4.3 0.6,8.2" fill="#111"/></svg>
<div class="t" style="left:724.4px;top:450px;line-height:14px;height:14px;color:#111;letter-spacing:0.107px;">Опционы (позиции)</div>
<svg style="left:706px;top:452.1px" width="6" height="9"><polygon points="0.6,0.4 5.2,4.3 0.6,8.2" fill="#111"/></svg>
<div class="t" style="left:724.4px;top:475px;line-height:14px;height:14px;color:#111;letter-spacing:0.033px;">Опционы (Deribit)</div>
<svg style="left:706px;top:477.1px" width="6" height="9"><polygon points="0.6,0.4 5.2,4.3 0.6,8.2" fill="#111"/></svg>
<div class="t" style="left:724.4px;top:500px;line-height:14px;height:14px;color:#111;letter-spacing:0.165px;">Опционы</div>
<svg style="left:706px;top:502.1px" width="6" height="9"><polygon points="0.6,0.4 5.2,4.3 0.6,8.2" fill="#111"/></svg>
<div style="left:931.5px;top:118px;width:14px;height:408px;background:#dadada"></div>
<div style="left:931.5px;top:118px;width:14px;height:14px;background:#f2f2f2;border-bottom:1px solid #ccc"></div>
<svg style="left:935px;top:122px" width="8" height="6"><polygon points="0,5 7,5 3.5,0.8" fill="#666"/></svg>
<div style="left:931.5px;top:132px;width:14px;height:380px;background:#e6e6e6"></div>
<div style="left:932px;top:150px;width:13.5px;height:330px;background:#f5f5f5;border-left:1px solid #c9c9c9;border-right:1px solid #c9c9c9"></div>
<div style="left:935px;top:151px;width:9px;height:327px;background-image:radial-gradient(circle at 0.5px 0.5px,#7e7e7e 0.62px,rgba(126,126,126,0) 0.95px);background-size:3px 3px"></div>
<div style="left:931.5px;top:495px;width:14px;height:17px;background:#d4d4d4"></div>
<div style="left:931.5px;top:512px;width:14px;height:14px;background:#f2f2f2"></div>
<svg style="left:935px;top:516px" width="8" height="6"><polygon points="0,0.8 7,0.8 3.5,5" fill="#666"/></svg>
<div style="left:698px;top:530px;width:248px;height:24px;background:linear-gradient(#fcfcfc,#f0f0f0 50%,#dcdcdc);border-top:1px solid #cfcfcf;border-bottom:1px solid #c4c4c4"></div>
<div class="t" style="left:704.4px;top:535px;line-height:14px;height:14px;color:#111;letter-spacing:-0.313px;">Свойства</div>
<svg style="left:933px;top:537.5px" width="8" height="10"><path d="M1.5 0.6 H5.6 M2 0.6 V5.2 M5 0.6 V5.2 M0.3 5.4 H7 M3.6 5.4 V9.6" stroke="#444" stroke-width="1.1" fill="none"/><rect x="4.2" y="0.6" width="1.2" height="4.8" fill="#444"/></svg>
<div style="left:698px;top:554px;width:248px;height:296px;background:#f9f9f9;border-right:1px solid #d0d0d0"></div>
<svg style="left:707px;top:563.5px" width="8" height="6"><path d="M0.6 5 L3.8 1.4 L7 5" stroke="#111" stroke-width="1.5" fill="none"/></svg>
<div class="t" style="left:723px;top:559px;line-height:14px;height:14px;color:#111;letter-spacing:-0.298px;">Главная</div>
<svg style="left:707px;top:672.5px" width="8" height="6"><path d="M0.6 5 L3.8 1.4 L7 5" stroke="#111" stroke-width="1.5" fill="none"/></svg>
<div class="t" style="left:723.2px;top:668px;line-height:14px;height:14px;color:#111;letter-spacing:-0.052px;">Параметры</div>
<div style="left:698px;top:576px;width:248px;height:1px;background:#bfbfbf"></div>
<div style="left:698px;top:605px;width:248px;height:1px;background:#bfbfbf"></div>
<div style="left:698px;top:634px;width:248px;height:1px;background:#bfbfbf"></div>
<div style="left:698px;top:662px;width:248px;height:1px;background:#bfbfbf"></div>
<div style="left:698px;top:685px;width:248px;height:1px;background:#bfbfbf"></div>
<div style="left:698px;top:715px;width:248px;height:1px;background:#bfbfbf"></div>
<div style="left:698px;top:744px;width:248px;height:1px;background:#bfbfbf"></div>
<div style="left:698px;top:773px;width:248px;height:1px;background:#bfbfbf"></div>
<div style="left:818px;top:577px;width:1px;height:85px;background:#bfbfbf"></div>
<div style="left:818px;top:686px;width:1px;height:87px;background:#bfbfbf"></div>
<div style="left:944.5px;top:554px;width:1px;height:220px;background:#cfcfcf"></div>
<div class="t" style="left:707.1px;top:587px;line-height:14px;height:14px;color:#111;letter-spacing:0.039px;">Имя блока</div>
<div class="t" style="left:707.1px;top:616px;line-height:14px;height:14px;color:#111;letter-spacing:0.155px;">Обработчик</div>
<div class="t" style="left:707.1px;top:644px;line-height:14px;height:14px;color:#111;letter-spacing:0.103px;">Тип обработчика</div>
<div class="t" style="left:707.1px;top:697px;line-height:14px;height:14px;color:#111;letter-spacing:-0.174px;">Интервал</div>
<div class="t" style="left:707.1px;top:726px;line-height:14px;height:14px;color:#111;letter-spacing:-0.340px;">База интервала</div>
<div class="t" style="left:707.1px;top:755px;line-height:14px;height:14px;color:#111;letter-spacing:0.075px;">Алгоритм вычис...</div>
<div style="left:823px;top:581px;width:118px;height:20.5px;background:#fff;border:1.4px solid #000"></div>
<div class="t" style="left:828.2px;top:585px;line-height:14px;height:14px;color:#111;letter-spacing:-0.093px;">ОбъёмЗаПерио</div>
<div class="t" style="left:823.3px;top:610px;line-height:14px;height:14px;color:#111;letter-spacing:-0.156px;">Объём за период</div>
<svg style="left:926.5px;top:614px" width="13" height="14" viewBox="0 0 13 14"><path d="M3.4 6 V3.8 C3.4 0.6 9.6 0.6 9.6 3.8 V6" fill="none" stroke="#c9a84a" stroke-width="1.8"/><rect x="0.8" y="5.6" width="11.4" height="8" rx="1" fill="#e3c463" stroke="#b8963a" stroke-width="0.8"/><path d="M1.5 8 H11.5 M1.5 10 H11.5 M1.5 12 H11.5" stroke="#f3e2a0" stroke-width="0.8"/></svg>
<div class="t" style="left:823.3px;top:643px;line-height:14px;height:14px;color:#111;letter-spacing:0.162px;">Потоковый</div>
<svg style="left:826px;top:694px" width="17" height="14" viewBox="0 0 17 14"><path d="M2.6 0.3 V13.7 M8 0.3 V13.7 M13.4 0.3 V13.7" stroke="#000" stroke-width="1.3"/><path d="M0.4 11 H4.8 M5.8 3.2 H10.2 M11.2 7.4 H15.8" stroke="#000" stroke-width="1.8"/></svg>
<svg style="left:826px;top:723.3px" width="17" height="14" viewBox="0 0 17 14"><path d="M2.6 0.3 V13.7 M8 0.3 V13.7 M13.4 0.3 V13.7" stroke="#000" stroke-width="1.3"/><path d="M0.4 11 H4.8 M5.8 3.2 H10.2 M11.2 7.4 H15.8" stroke="#000" stroke-width="1.8"/></svg>
<svg style="left:826px;top:752.2px" width="17" height="14" viewBox="0 0 17 14"><path d="M2.6 0.3 V13.7 M8 0.3 V13.7 M13.4 0.3 V13.7" stroke="#000" stroke-width="1.3"/><path d="M0.4 11 H4.8 M5.8 3.2 H10.2 M11.2 7.4 H15.8" stroke="#000" stroke-width="1.8"/></svg>
<div style="left:849px;top:691.3px;width:92px;height:20.4px;background:#f3f3f3;border:1px solid #b4b4b4"></div>
<div class="t" style="left:854.2px;top:695px;line-height:14px;height:14px;color:#aaa;">1</div>
<div style="left:849px;top:719.5px;width:92px;height:22.3px;background:linear-gradient(#f0f0f0,#dcdcdc 50%,#c4c4c4);border:1.6px solid #000"></div>
<div class="t" style="left:854.5px;top:724px;line-height:14px;height:14px;color:#111;letter-spacing:-0.391px;">Час</div>
<svg style="left:926px;top:728.1px" width="12" height="7"><polygon points="0.3,0.5 10.9,0.5 5.6,6.2" fill="#000"/></svg>
<div style="left:849px;top:748.4px;width:92px;height:22.3px;background:linear-gradient(#f0f0f0,#dcdcdc 50%,#c4c4c4);border:1.6px solid #000"></div>
<div class="t" style="left:854.5px;top:753px;line-height:14px;height:14px;color:#111;letter-spacing:-0.144px;">Сумма</div>
<svg style="left:926px;top:757.0px" width="12" height="7"><polygon points="0.3,0.5 10.9,0.5 5.6,6.2" fill="#000"/></svg>
<div style="left:698px;top:850px;width:248px;height:20px;background:#e6e6e6;border-top:1px solid #d4d4d4"></div>
<div style="left:698px;top:850px;width:59.6px;height:20px;background:#3f98f7"></div>
<div style="left:757.6px;top:850px;width:1.3px;height:20px;background:#111"></div>
<div class="t" style="left:703.5px;top:853px;line-height:14px;height:14px;color:#fff;text-decoration:underline;letter-spacing:-0.275px;">Свойства</div>
<div class="t" style="left:765.6px;top:853px;line-height:14px;height:14px;color:#111;letter-spacing:0.042px;">Подробный</div>
<div style="left:834px;top:850px;width:1.3px;height:20px;background:#111"></div>
<svg style="left:0;top:0" width="1890" height="880" viewBox="0 0 1890 880" shape-rendering="auto">
<rect x="949" y="72" width="939" height="798" fill="#f2f2f2"/>
<rect x="985" y="72" width="860" height="753.5" fill="#fff"/>
<path d="M984.5 72 V826 M1845.5 72 V826 M984 825.5 H1846" stroke="#d9d9d9" stroke-width="1" fill="none"/>
<path d="M1143.6 72 V825.5" stroke="#d4d4d4" stroke-width="1.2"/>
<path d="M1420.6 72 V825.5" stroke="#d4d4d4" stroke-width="1.2"/>
<path d="M1703.6 72 V825.5" stroke="#d4d4d4" stroke-width="1.2"/>
<path d="M985 238.5 H1845" stroke="#d8d8d8" stroke-width="1.2"/>
<path d="M985 556.3 H1845" stroke="#d8d8d8" stroke-width="1.2"/>
<path d="M985 656 H1845" stroke="#d8d8d8" stroke-width="1.2"/>
<path d="M985 755.4 H1845" stroke="#d8d8d8" stroke-width="1.2"/>
<path d="M985 149.5 H1845" stroke="#44dd44" stroke-width="1" stroke-dasharray="3.2 1.3"/>
<rect x="949" y="319.9" width="939" height="1.35" fill="#000"/>
<rect x="949" y="491.5" width="939" height="1.35" fill="#000"/>
<g fill="#1fdc1f"><rect x="1139" y="276" width="1" height="8"/><rect x="1188" y="266" width="1" height="9"/><rect x="1217" y="221" width="1" height="9"/><rect x="1217" y="240" width="1" height="8"/><rect x="1408" y="240" width="1" height="8"/><rect x="1415" y="194" width="1" height="18"/><rect x="1422" y="177" width="1" height="17"/><rect x="1514" y="178" width="1" height="8"/><rect x="1564" y="141" width="1" height="18"/><rect x="1564" y="178" width="1" height="8"/><rect x="1571" y="132" width="1" height="18"/><rect x="1592" y="160" width="1" height="8"/><rect x="1606" y="133" width="1" height="8"/><rect x="1613" y="96" width="1" height="9"/><rect x="1613" y="124" width="1" height="8"/><rect x="1621" y="97" width="1" height="8"/><rect x="1699" y="142" width="1" height="8"/><rect x="1734" y="186" width="1" height="8"/><rect x="1734" y="204" width="1" height="17"/><rect x="1762" y="203" width="1" height="9"/><rect x="1784" y="213" width="1" height="8"/><rect x="1791" y="186" width="1" height="17"/><rect x="1791" y="213" width="1" height="8"/><rect x="1798" y="168" width="1" height="9"/><rect x="1798" y="195" width="1" height="8"/><rect x="1805" y="169" width="1" height="17"/><rect x="1826" y="168" width="1" height="9"/><rect x="1826" y="204" width="1" height="8"/><rect x="1840" y="187" width="1" height="25"/></g>
<g fill="#fff" stroke="#1fdc1f" stroke-width="1"><rect x="1136.5" y="266.5" width="5" height="9"/><rect x="1165.5" y="284.5" width="5" height="9"/><rect x="1179.5" y="293.5" width="5" height="18"/><rect x="1186.5" y="275.5" width="5" height="9"/><rect x="1200.5" y="266.5" width="5" height="27"/><rect x="1207.5" y="239.5" width="5" height="18"/><rect x="1214.5" y="230.5" width="5" height="9"/><rect x="1221.5" y="230.5" width="5" height="9"/><rect x="1243.5" y="239.5" width="5" height="9"/><rect x="1299.5" y="230.5" width="5" height="18"/><rect x="1313.5" y="230.5" width="5" height="9"/><rect x="1320.5" y="230.5" width="6" height="9"/><rect x="1335.5" y="230.5" width="5" height="9"/><rect x="1349.5" y="230.5" width="5" height="27"/><rect x="1391.5" y="239.5" width="5" height="18"/><rect x="1406.5" y="212.5" width="5" height="27"/><rect x="1413.5" y="212.5" width="5" height="9"/><rect x="1420.5" y="194.5" width="5" height="9"/><rect x="1469.5" y="177.5" width="5" height="26"/><rect x="1512.5" y="168.5" width="5" height="9"/><rect x="1519.5" y="168.5" width="5" height="9"/><rect x="1540.5" y="168.5" width="5" height="18"/><rect x="1561.5" y="159.5" width="5" height="18"/><rect x="1568.5" y="150.5" width="6" height="9"/><rect x="1590.5" y="150.5" width="5" height="9"/><rect x="1597.5" y="132.5" width="5" height="9"/><rect x="1604.5" y="114.5" width="5" height="18"/><rect x="1611.5" y="105.5" width="5" height="18"/><rect x="1618.5" y="87.5" width="5" height="9"/><rect x="1639.5" y="87.5" width="5" height="27"/><rect x="1696.5" y="132.5" width="5" height="9"/><rect x="1731.5" y="194.5" width="6" height="9"/><rect x="1760.5" y="212.5" width="5" height="18"/><rect x="1781.5" y="194.5" width="5" height="18"/><rect x="1788.5" y="203.5" width="5" height="9"/><rect x="1795.5" y="177.5" width="5" height="17"/><rect x="1802.5" y="159.5" width="5" height="9"/><rect x="1824.5" y="177.5" width="5" height="26"/><rect x="1838.5" y="150.5" width="5" height="36"/></g>
<g fill="#fa0000"><rect x="1143" y="266" width="6" height="1"/><rect x="1146" y="266" width="1" height="18"/><rect x="1150" y="266" width="6" height="19"/><rect x="1153" y="257" width="1" height="9"/><rect x="1153" y="285" width="1" height="8"/><rect x="1157" y="275" width="7" height="19"/><rect x="1172" y="302" width="6" height="1"/><rect x="1174" y="293" width="1" height="18"/><rect x="1193" y="275" width="6" height="1"/><rect x="1195" y="275" width="1" height="18"/><rect x="1228" y="239" width="6" height="1"/><rect x="1235" y="239" width="7" height="1"/><rect x="1250" y="239" width="6" height="19"/><rect x="1252" y="230" width="1" height="9"/><rect x="1257" y="239" width="6" height="1"/><rect x="1259" y="230" width="1" height="9"/><rect x="1264" y="248" width="6" height="1"/><rect x="1266" y="239" width="1" height="9"/><rect x="1271" y="230" width="6" height="19"/><rect x="1273" y="249" width="1" height="17"/><rect x="1278" y="248" width="6" height="1"/><rect x="1285" y="248" width="6" height="10"/><rect x="1288" y="239" width="1" height="9"/><rect x="1292" y="248" width="6" height="1"/><rect x="1306" y="230" width="6" height="1"/><rect x="1309" y="221" width="1" height="9"/><rect x="1328" y="239" width="6" height="1"/><rect x="1330" y="239" width="1" height="9"/><rect x="1342" y="248" width="6" height="10"/><rect x="1344" y="239" width="1" height="9"/><rect x="1356" y="239" width="6" height="1"/><rect x="1358" y="239" width="1" height="18"/><rect x="1363" y="248" width="6" height="1"/><rect x="1370" y="257" width="6" height="1"/><rect x="1377" y="248" width="6" height="1"/><rect x="1380" y="239" width="1" height="27"/><rect x="1384" y="248" width="6" height="10"/><rect x="1398" y="239" width="7" height="10"/><rect x="1427" y="177" width="6" height="18"/><rect x="1429" y="195" width="1" height="8"/><rect x="1434" y="186" width="6" height="9"/><rect x="1436" y="177" width="1" height="9"/><rect x="1441" y="186" width="6" height="1"/><rect x="1443" y="186" width="1" height="8"/><rect x="1448" y="186" width="6" height="1"/><rect x="1450" y="186" width="1" height="17"/><rect x="1455" y="186" width="6" height="1"/><rect x="1458" y="177" width="1" height="17"/><rect x="1462" y="186" width="6" height="18"/><rect x="1465" y="204" width="1" height="8"/><rect x="1476" y="186" width="6" height="1"/><rect x="1479" y="177" width="1" height="9"/><rect x="1483" y="177" width="7" height="1"/><rect x="1486" y="177" width="1" height="17"/><rect x="1491" y="177" width="6" height="1"/><rect x="1493" y="168" width="1" height="18"/><rect x="1498" y="186" width="6" height="9"/><rect x="1505" y="186" width="6" height="1"/><rect x="1526" y="177" width="6" height="1"/><rect x="1533" y="177" width="6" height="10"/><rect x="1536" y="168" width="1" height="9"/><rect x="1547" y="168" width="6" height="10"/><rect x="1550" y="178" width="1" height="8"/><rect x="1554" y="177" width="6" height="10"/><rect x="1557" y="168" width="1" height="9"/><rect x="1576" y="150" width="6" height="19"/><rect x="1578" y="141" width="1" height="9"/><rect x="1578" y="169" width="1" height="8"/><rect x="1583" y="168" width="6" height="1"/><rect x="1585" y="159" width="1" height="9"/><rect x="1625" y="87" width="6" height="10"/><rect x="1628" y="97" width="1" height="8"/><rect x="1632" y="87" width="6" height="19"/><rect x="1635" y="106" width="1" height="8"/><rect x="1646" y="105" width="7" height="1"/><rect x="1649" y="78" width="1" height="27"/><rect x="1654" y="87" width="6" height="10"/><rect x="1661" y="96" width="6" height="10"/><rect x="1663" y="87" width="1" height="9"/><rect x="1668" y="105" width="6" height="37"/><rect x="1675" y="123" width="6" height="10"/><rect x="1682" y="132" width="6" height="1"/><rect x="1684" y="123" width="1" height="9"/><rect x="1689" y="132" width="6" height="1"/><rect x="1703" y="150" width="6" height="1"/><rect x="1706" y="141" width="1" height="27"/><rect x="1710" y="168" width="6" height="10"/><rect x="1713" y="178" width="1" height="8"/><rect x="1717" y="186" width="6" height="9"/><rect x="1720" y="177" width="1" height="9"/><rect x="1724" y="186" width="6" height="18"/><rect x="1739" y="186" width="6" height="36"/><rect x="1746" y="212" width="6" height="10"/><rect x="1748" y="203" width="1" height="9"/><rect x="1748" y="222" width="1" height="8"/><rect x="1753" y="221" width="6" height="10"/><rect x="1755" y="212" width="1" height="9"/><rect x="1767" y="203" width="6" height="10"/><rect x="1774" y="212" width="6" height="1"/><rect x="1776" y="203" width="1" height="27"/><rect x="1809" y="168" width="7" height="36"/><rect x="1812" y="159" width="1" height="9"/><rect x="1817" y="194" width="6" height="19"/><rect x="1819" y="186" width="1" height="8"/><rect x="1819" y="213" width="1" height="35"/><rect x="1831" y="168" width="6" height="27"/><rect x="1833" y="150" width="1" height="18"/></g>
<g fill="#0022aa"><rect x="1136" y="468" width="6" height="16"/><rect x="1143" y="467" width="6" height="17"/><rect x="1150" y="465" width="6" height="19"/><rect x="1157" y="478" width="7" height="6"/><rect x="1165" y="482" width="6" height="2"/><rect x="1172" y="456" width="6" height="28"/><rect x="1179" y="427" width="6" height="57"/><rect x="1186" y="472" width="6" height="12"/><rect x="1193" y="471" width="6" height="13"/><rect x="1200" y="473" width="6" height="11"/><rect x="1207" y="463" width="6" height="21"/><rect x="1214" y="422" width="6" height="62"/><rect x="1221" y="475" width="6" height="9"/><rect x="1228" y="480" width="6" height="4"/><rect x="1235" y="477" width="7" height="7"/><rect x="1243" y="481" width="6" height="3"/><rect x="1250" y="467" width="6" height="17"/><rect x="1257" y="472" width="6" height="12"/><rect x="1264" y="481" width="6" height="3"/><rect x="1271" y="454" width="6" height="30"/><rect x="1278" y="483" width="6" height="1"/><rect x="1285" y="478" width="6" height="6"/><rect x="1292" y="480" width="6" height="4"/><rect x="1299" y="479" width="6" height="5"/><rect x="1306" y="469" width="6" height="15"/><rect x="1313" y="479" width="6" height="5"/><rect x="1320" y="479" width="7" height="5"/><rect x="1328" y="470" width="6" height="14"/><rect x="1335" y="480" width="6" height="4"/><rect x="1342" y="478" width="6" height="6"/><rect x="1349" y="472" width="6" height="12"/><rect x="1356" y="467" width="6" height="17"/><rect x="1363" y="480" width="6" height="4"/><rect x="1370" y="478" width="6" height="6"/><rect x="1377" y="451" width="6" height="33"/><rect x="1384" y="482" width="6" height="2"/><rect x="1391" y="479" width="6" height="5"/><rect x="1398" y="479" width="7" height="5"/><rect x="1406" y="444" width="6" height="40"/><rect x="1413" y="429" width="6" height="55"/><rect x="1420" y="460" width="6" height="24"/><rect x="1427" y="436" width="6" height="48"/><rect x="1434" y="475" width="6" height="9"/><rect x="1441" y="473" width="6" height="11"/><rect x="1448" y="478" width="6" height="6"/><rect x="1455" y="480" width="6" height="4"/><rect x="1462" y="465" width="6" height="19"/><rect x="1469" y="479" width="6" height="5"/><rect x="1476" y="480" width="6" height="4"/><rect x="1483" y="479" width="7" height="5"/><rect x="1491" y="470" width="6" height="14"/><rect x="1498" y="470" width="6" height="14"/><rect x="1505" y="482" width="6" height="2"/><rect x="1512" y="478" width="6" height="6"/><rect x="1519" y="478" width="6" height="6"/><rect x="1526" y="480" width="6" height="4"/><rect x="1533" y="475" width="6" height="9"/><rect x="1540" y="471" width="6" height="13"/><rect x="1547" y="474" width="6" height="10"/><rect x="1554" y="471" width="6" height="13"/><rect x="1561" y="379" width="6" height="105"/><rect x="1568" y="434" width="7" height="50"/><rect x="1576" y="446" width="6" height="38"/><rect x="1583" y="475" width="6" height="9"/><rect x="1590" y="478" width="6" height="6"/><rect x="1597" y="477" width="6" height="7"/><rect x="1604" y="453" width="6" height="31"/><rect x="1611" y="438" width="6" height="46"/><rect x="1618" y="459" width="6" height="25"/><rect x="1625" y="456" width="6" height="28"/><rect x="1632" y="436" width="6" height="48"/><rect x="1639" y="456" width="6" height="28"/><rect x="1646" y="467" width="7" height="17"/><rect x="1654" y="481" width="6" height="3"/><rect x="1661" y="479" width="6" height="5"/><rect x="1668" y="449" width="6" height="35"/><rect x="1675" y="477" width="6" height="7"/><rect x="1682" y="480" width="6" height="4"/><rect x="1689" y="481" width="6" height="3"/><rect x="1696" y="461" width="6" height="23"/><rect x="1703" y="431" width="6" height="53"/><rect x="1710" y="468" width="6" height="16"/><rect x="1717" y="440" width="6" height="44"/><rect x="1724" y="441" width="6" height="43"/><rect x="1731" y="427" width="7" height="57"/><rect x="1739" y="456" width="6" height="28"/><rect x="1746" y="455" width="6" height="29"/><rect x="1753" y="477" width="6" height="7"/><rect x="1760" y="467" width="6" height="17"/><rect x="1767" y="480" width="6" height="4"/><rect x="1774" y="444" width="6" height="40"/><rect x="1781" y="454" width="6" height="30"/><rect x="1788" y="456" width="6" height="28"/><rect x="1795" y="458" width="6" height="26"/><rect x="1802" y="459" width="6" height="25"/><rect x="1809" y="453" width="7" height="31"/><rect x="1817" y="412" width="6" height="72"/><rect x="1824" y="450" width="6" height="34"/><rect x="1831" y="451" width="6" height="33"/><rect x="1838" y="329" width="6" height="155"/></g>
<path d="M1139 656.5 H1841.5" stroke="#4b3c9c" stroke-width="1.3"/>
<polyline points="1139.5,811.4 1146.5,809.0 1153.5,806.3 1160.5,805.4 1168.5,805.2 1175.5,801.2 1182.5,793.1 1189.5,791.4 1196.5,789.5 1203.5,788.0 1210.5,785.0 1217.5,776.2 1224.5,774.9 1231.5,774.4 1238.5,773.4 1246.5,773.0 1253.5,770.6 1260.5,769.0 1267.5,768.6 1274.5,764.3 1281.5,764.2 1288.5,763.4 1295.5,762.9 1302.5,762.2 1309.5,760.1 1316.5,759.4 1323.5,758.7 1331.5,756.8 1338.5,756.3 1345.5,755.4 1352.5,753.8 1359.5,751.4 1366.5,750.9 1373.5,750.1 1380.5,745.5 1387.5,745.2 1394.5,744.5 1401.5,743.8 1409.5,737.6 1416.5,729.3 1423.5,725.6 1430.5,718.8 1437.5,717.5 1444.5,716.0 1451.5,715.2 1458.5,714.6 1465.5,712.0 1472.5,711.3 1479.5,710.8 1486.5,710.1 1494.5,708.2 1501.5,706.2 1508.5,706.0 1515.5,705.2 1522.5,704.3 1529.5,703.8 1536.5,702.6 1543.5,700.8 1550.5,699.4 1557.5,697.6 1564.5,681.9 1571.5,673.3 1579.5,666.4 1586.5,665.4 1593.5,664.8 1600.5,664.0 1607.5,659.8 1614.5,653.1 1621.5,649.1 1628.5,644.6 1635.5,637.3 1642.5,633.5 1649.5,631.4 1657.5,631.3 1664.5,630.9 1671.5,625.6 1678.5,624.3 1685.5,623.4 1692.5,622.6 1699.5,618.9 1706.5,610.9 1713.5,608.3 1720.5,601.6 1727.5,595.0 1734.5,586.4 1742.5,582.5 1749.5,578.5 1756.5,577.6 1763.5,575.4 1770.5,575.0 1777.5,569.1 1784.5,564.5 1791.5,560.3 1798.5,556.4 1805.5,552.6 1812.5,547.9 1820.5,536.4 1827.5,530.6 1834.5,524.8 1841.5,498.9" fill="none" stroke="#e0115f" stroke-width="1.2" stroke-linejoin="round"/>
<rect x="1845.5" y="142.5" width="42" height="15.3" fill="#1fe01f"/>
<text x="1849.3" y="155" font-size="12" fill="#fff" textLength="35" lengthAdjust="spacingAndGlyphs">73 700</text>
<text x="1849.3" y="245" font-size="12" fill="#222" textLength="35" lengthAdjust="spacingAndGlyphs">73 600</text>
<rect x="949" y="322" width="34" height="16" fill="#0022aa"/>
<text x="956.8" y="335" font-size="12" fill="#fff" textLength="18.9" lengthAdjust="spacingAndGlyphs">578</text>
<text x="956.5" y="382" font-size="12" fill="#222" textLength="19.3" lengthAdjust="spacingAndGlyphs">400</text>
<text x="956.5" y="435" font-size="12" fill="#222" textLength="19.3" lengthAdjust="spacingAndGlyphs">200</text>
<rect x="949" y="494" width="34.2" height="15.8" fill="#e0115f"/>
<text x="951.8" y="507" font-size="12" fill="#fff" textLength="28.5" lengthAdjust="spacingAndGlyphs">7 477</text>
<text x="951.4" y="569" font-size="12" fill="#222" textLength="29" lengthAdjust="spacingAndGlyphs">6 000</text>
<text x="951.4" y="652" font-size="12" fill="#222" textLength="29" lengthAdjust="spacingAndGlyphs">4 000</text>
<text x="951.4" y="736" font-size="12" fill="#222" textLength="29" lengthAdjust="spacingAndGlyphs">2 000</text>
<text x="1863.4" y="562" font-size="12" fill="#222">0</text>
<rect x="1846" y="649.2" width="41.5" height="15.3" fill="#4b3c9c"/>
<text x="1863.4" y="662" font-size="12" fill="#fff">0</text>
<text x="1863.4" y="761" font-size="12" fill="#222">0</text>
<text x="1144" y="838" font-size="12" fill="#222" textLength="28.5" lengthAdjust="spacingAndGlyphs">23:00</text>
<text x="1144" y="854" font-size="12" fill="#222" textLength="57" lengthAdjust="spacingAndGlyphs">06.01.2016</text>
<text x="1420.6" y="838" font-size="12" fill="#222" textLength="28.5" lengthAdjust="spacingAndGlyphs">23:20</text>
<text x="1703.6" y="838" font-size="12" fill="#222" textLength="28.5" lengthAdjust="spacingAndGlyphs">23:40</text>
<rect x="992.5" y="79.5" width="27" height="27" fill="#f3f3f3" stroke="#c6c6c6" stroke-width="1"/><rect x="998" y="86.1" width="1.9" height="1.9" fill="#666"/><rect x="1001.8" y="86.1" width="12.2" height="1.9" fill="#666"/><rect x="998" y="90.0" width="1.9" height="1.9" fill="#666"/><rect x="1001.8" y="90.0" width="12.2" height="1.9" fill="#666"/><rect x="998" y="93.9" width="1.9" height="1.9" fill="#666"/><rect x="1001.8" y="93.9" width="12.2" height="1.9" fill="#666"/><rect x="998" y="97.8" width="1.9" height="1.9" fill="#666"/><rect x="1001.8" y="97.8" width="12.2" height="1.9" fill="#666"/>
<text x="1026.2" y="97" font-size="12" fill="#111" textLength="43.8" lengthAdjust="spacingAndGlyphs" text-decoration="underline">Главная</text>
<rect x="992.5" y="331.5" width="27" height="27" fill="#f3f3f3" stroke="#c6c6c6" stroke-width="1"/><rect x="998" y="338.1" width="1.9" height="1.9" fill="#666"/><rect x="1001.8" y="338.1" width="12.2" height="1.9" fill="#666"/><rect x="998" y="342.0" width="1.9" height="1.9" fill="#666"/><rect x="1001.8" y="342.0" width="12.2" height="1.9" fill="#666"/><rect x="998" y="345.9" width="1.9" height="1.9" fill="#666"/><rect x="1001.8" y="345.9" width="12.2" height="1.9" fill="#666"/><rect x="998" y="349.8" width="1.9" height="1.9" fill="#666"/><rect x="1001.8" y="349.8" width="12.2" height="1.9" fill="#666"/>
<text x="1026" y="349" font-size="12" fill="#111" textLength="37.7" lengthAdjust="spacingAndGlyphs" text-decoration="underline">Объём</text>
<rect x="992.5" y="503.5" width="27" height="27" fill="#f3f3f3" stroke="#c6c6c6" stroke-width="1"/><rect x="998" y="510.1" width="1.9" height="1.9" fill="#666"/><rect x="1001.8" y="510.1" width="12.2" height="1.9" fill="#666"/><rect x="998" y="514.0" width="1.9" height="1.9" fill="#666"/><rect x="1001.8" y="514.0" width="12.2" height="1.9" fill="#666"/><rect x="998" y="517.9" width="1.9" height="1.9" fill="#666"/><rect x="1001.8" y="517.9" width="12.2" height="1.9" fill="#666"/><rect x="998" y="521.8" width="1.9" height="1.9" fill="#666"/><rect x="1001.8" y="521.8" width="12.2" height="1.9" fill="#666"/>
<text x="1025.8" y="521" font-size="12" fill="#111" textLength="88" lengthAdjust="spacingAndGlyphs" text-decoration="underline">Тиковый объём</text>
<rect x="949" y="857" width="939" height="13.8" fill="#d6d6d6"/>
<rect x="949" y="857" width="14" height="13.5" fill="#f0f0f0"/><rect x="1873" y="857" width="14.5" height="13.5" fill="#f0f0f0"/>
<polygon points="959,860 959,868 954.2,864" fill="#111"/><polygon points="1878,860 1878,868 1882.8,864" fill="#111"/>
</svg>
<div style="left:946px;top:24px;width:1px;height:24px;background:#f4f4f4"></div>
<div style="left:947px;top:24px;width:2px;height:24px;background:#667b87"></div>
<div style="left:946px;top:48px;width:3px;height:822px;background:#e9e9e9"></div>
<div style="left:946.4px;top:48px;width:0.9px;height:822px;background:#a8a8a8"></div>
<svg style="left:763.8px;top:33.1px" width="6" height="9"><polygon points="5,0 5,8 0,4.0" fill="#8fa1ad"/></svg>
<svg style="left:779.5px;top:33.1px" width="6" height="9"><polygon points="0,0 0,8 5,4.0" fill="#8fa1ad"/></svg>
<svg style="left:793.8px;top:36.6px" width="9" height="6"><polygon points="0,0.5 8,0.5 4,5" fill="#eef2f5"/></svg>
<svg style="left:808px;top:29px" width="20" height="16" viewBox="0 0 20 16"><path d="M1 14.5 V3.2 C1 2.4 1.4 2 2.2 2 H6.4 L7.6 0.8 H13.4 C14 0.8 14.4 1.2 14.4 1.8 V5" fill="none" stroke="#eef2f5" stroke-width="1.5"/><path d="M1 14.6 L4 5.6 H18.2 L15.6 14.6 Z" fill="none" stroke="#eef2f5" stroke-width="1.5" stroke-linejoin="round"/></svg>
<svg style="left:837px;top:30px" width="16" height="15" viewBox="0 0 16 15"><path d="M1 0.8 H13 L15 2.8 V14.2 H1 Z" fill="none" stroke="#eef2f5" stroke-width="1.5"/><rect x="4" y="0.8" width="6.5" height="4.2" fill="#eef2f5"/><rect x="8" y="1.4" width="1.6" height="2.8" fill="#667b87"/><path d="M3.4 8 H12.6 M3.4 10.4 H12.6 M3.4 12.6 H12.6" stroke="#eef2f5" stroke-width="1.2"/></svg>
<svg style="left:863px;top:29px" width="17" height="16" viewBox="0 0 17 16"><path d="M6.6 0.3 H10.4 V5.4 H13.8 L8.5 10.8 L3.2 5.4 H6.6 Z" fill="#eef2f5"/><path d="M0.8 9.6 V15 H16.2 V9.6 H13 L12 12 H5 L4 9.6 Z" fill="#eef2f5"/></svg>
<svg style="left:887px;top:29px" width="16" height="16" viewBox="0 0 16 16"><path d="M2.2 9.4 A5.4 5.4 0 0 1 11 4.2" fill="none" stroke="#eef2f5" stroke-width="2.2"/><polygon points="9.4,0.6 14.4,4.6 8.6,7.2" fill="#eef2f5"/><path d="M13.8 6.6 A5.4 5.4 0 0 1 5 11.8" fill="none" stroke="#eef2f5" stroke-width="2.2"/><polygon points="6.6,15.4 1.6,11.4 7.4,8.8" fill="#eef2f5"/></svg>
<svg style="left:908px;top:29px" width="14" height="16" viewBox="0 0 14 16"><polygon points="1.2,1.2 12.4,8 1.2,14.8" fill="none" stroke="#eef2f5" stroke-width="1.5" stroke-linejoin="miter"/></svg>
<svg style="left:925px;top:29px" width="19" height="16" viewBox="0 0 19 16"><path d="M3.6 0.5 H7.2 V7.6 H10.4 L5.4 15 L0.4 7.6 H3.6 Z" fill="#eef2f5"/><path d="M9.8 0.3 H12.6 L18 7.8 L12.6 15.4 H9.8 L13.9 7.8 Z" fill="#eef2f5"/></svg>
<svg style="left:1819.8px;top:9.2px" width="5.2" height="8.8"><polygon points="4.2,0 4.2,7.8 0,3.9" fill="#8a929c"/></svg>
<svg style="left:1836px;top:9.2px" width="5.2" height="8.8"><polygon points="0,0 0,7.8 4.2,3.9" fill="#9ba3ac"/></svg>
<svg style="left:1850px;top:12.6px" width="9" height="5"><polygon points="0,0.3 8,0.3 4,4.5" fill="#eef2f5"/></svg>
<svg style="left:1865px;top:4px" width="19" height="18" viewBox="0 0 19 18"><path d="M3 15.5 L13 5" stroke="#eef2f5" stroke-width="2.4"/><path d="M11.2 1.6 L16.8 7" stroke="#eef2f5" stroke-width="3.4"/><path d="M15.6 15.6 L7.6 7.4" stroke="#eef2f5" stroke-width="2.2"/><path d="M2 2.2 L5.4 1.2 L8.4 4.4 L7.4 7.6 L4 8.6 L5.6 5.6 L4.4 4 Z" fill="#eef2f5"/></svg>
<svg style="left:1707px;top:33px" width="6" height="9"><polygon points="5,0 5,8 0,4.0" fill="#8fa1ad"/></svg>
<svg style="left:1723px;top:33px" width="6" height="9"><polygon points="0,0 0,8 5,4.0" fill="#eef2f5"/></svg>
<svg style="left:1734px;top:33px" width="9" height="9"><rect x="0" y="0" width="8" height="1.4" fill="#eef2f5"/><polygon points="0,3.2 8,3.2 4,8" fill="#eef2f5"/></svg>
<svg style="left:1749px;top:29px" width="20" height="16" viewBox="0 0 20 16"><path d="M1 14.5 V3.2 C1 2.4 1.4 2 2.2 2 H6.4 L7.6 0.8 H13.4 C14 0.8 14.4 1.2 14.4 1.8 V5" fill="none" stroke="#eef2f5" stroke-width="1.5"/><path d="M1 14.6 L4 5.6 H18.2 L15.6 14.6 Z" fill="none" stroke="#eef2f5" stroke-width="1.5" stroke-linejoin="round"/></svg>
<svg style="left:1778px;top:30px" width="16" height="15" viewBox="0 0 16 15"><path d="M1 0.8 H13 L15 2.8 V14.2 H1 Z" fill="none" stroke="#eef2f5" stroke-width="1.5"/><rect x="4" y="0.8" width="6.5" height="4.2" fill="#eef2f5"/><rect x="8" y="1.4" width="1.6" height="2.8" fill="#667b87"/><path d="M3.4 8 H12.6 M3.4 10.4 H12.6 M3.4 12.6 H12.6" stroke="#eef2f5" stroke-width="1.2"/></svg>
<svg style="left:1804px;top:29px" width="17" height="16" viewBox="0 0 17 16"><path d="M6.6 0.3 H10.4 V5.4 H13.8 L8.5 10.8 L3.2 5.4 H6.6 Z" fill="#eef2f5"/><path d="M0.8 9.6 V15 H16.2 V9.6 H13 L12 12 H5 L4 9.6 Z" fill="#eef2f5"/></svg>
<svg style="left:1828px;top:29px" width="16" height="16" viewBox="0 0 16 16"><path d="M2.2 9.4 A5.4 5.4 0 0 1 11 4.2" fill="none" stroke="#eef2f5" stroke-width="2.2"/><polygon points="9.4,0.6 14.4,4.6 8.6,7.2" fill="#eef2f5"/><path d="M13.8 6.6 A5.4 5.4 0 0 1 5 11.8" fill="none" stroke="#eef2f5" stroke-width="2.2"/><polygon points="6.6,15.4 1.6,11.4 7.4,8.8" fill="#eef2f5"/></svg>
<svg style="left:1849px;top:29px" width="14" height="16" viewBox="0 0 14 16"><polygon points="1.2,1.2 12.4,8 1.2,14.8" fill="none" stroke="#eef2f5" stroke-width="1.5" stroke-linejoin="miter"/></svg>
<svg style="left:1866px;top:29px" width="19" height="16" viewBox="0 0 19 16"><path d="M3.6 0.5 H7.2 V7.6 H10.4 L5.4 15 L0.4 7.6 H3.6 Z" fill="#eef2f5"/><path d="M9.8 0.3 H12.6 L18 7.8 L12.6 15.4 H9.8 L13.9 7.8 Z" fill="#eef2f5"/></svg>
<div style="left:949px;top:26px;width:156px;height:22px;background:#fff;border-radius:3px 0 0 0"></div>
<div style="left:1105px;top:26px;width:2px;height:22px;background:#1a1a1a"></div>
<svg style="left:953px;top:29px" width="17" height="17" viewBox="0 0 17 17"><path d="M0.8 10.4 L5 6.2 L7.4 8.2 L13.6 1.4 L15.6 3" fill="none" stroke="#222" stroke-width="1.3"/><g stroke="#2a2aa8" stroke-width="1"><path d="M1.5 14 V16 M3.5 15 V16 M5.5 12.4 V16 M7.5 13.6 V16 M9.5 9.6 V16 M11.5 11.4 V16"/></g><path d="M13.6 6 V16 M15.6 4.6 V16" stroke="#e08a1e" stroke-width="1"/></svg>
<div class="t" style="left:977.1px;top:31px;line-height:14px;height:14px;color:#111;text-decoration:underline;letter-spacing:-0.582px;">RTS 04-06.01.16:30S</div>
<svg style="left:1091px;top:33px" width="9" height="9"><path d="M0.6 0.6 L8 7.8 M8 0.6 L0.6 7.8" stroke="#222" stroke-width="1.3" fill="none"/></svg>
<div style="left:1108px;top:26px;width:111px;height:22px;background:linear-gradient(#efefef,#e6e6e6);border-radius:4px 0 0 0;border-right:1.6px solid #2a2a2a;border-left:1px solid #fbfbfb;border-top:1px solid #f6f6f6"></div>
<div class="t" style="left:1134.6px;top:31px;line-height:14px;height:14px;color:#1a1a1a;letter-spacing:-0.260px;">Результаты</div>
<svg style="left:1113.5px;top:32px" width="13" height="11" fill="#111"><rect x="0" y="0" width="4" height="2.4"/><rect x="5.4" y="0" width="7" height="2.4"/><rect x="0" y="4.3" width="7.4" height="2.4"/><rect x="8.8" y="4.3" width="3.6" height="2.4"/><rect x="0" y="8.6" width="4" height="2.4"/><rect x="5.4" y="8.6" width="7" height="2.4"/></svg>
<div style="left:1222px;top:26px;width:90.5px;height:22px;background:linear-gradient(#efefef,#e6e6e6);border-radius:4px 0 0 0;border-right:1.6px solid #2a2a2a;border-left:1px solid #fbfbfb;border-top:1px solid #f6f6f6"></div>
<div class="t" style="left:1249.4px;top:31px;line-height:14px;height:14px;color:#1a1a1a;letter-spacing:-0.301px;">Сделки</div>
<svg style="left:1227.5px;top:31px" width="14" height="13" viewBox="0 0 14 13"><polygon points="7,0 13.6,3.6 0.4,3.6" fill="#111"/><rect x="1" y="3.4" width="12" height="1.2" fill="#111"/><path d="M3.4 5.2 V10 M7 5.2 V10 M10.6 5.2 V10" stroke="#111" stroke-width="1.8"/><rect x="0.4" y="10.8" width="13.2" height="1.8" fill="#111"/></svg>
<div style="left:1315px;top:26px;width:126px;height:22px;background:linear-gradient(#efefef,#e6e6e6);border-radius:4px 0 0 0;border-right:1.6px solid #2a2a2a;border-left:1px solid #fbfbfb;border-top:1px solid #f6f6f6"></div>
<div class="t" style="left:1343.3px;top:31px;line-height:14px;height:14px;color:#1a1a1a;letter-spacing:-0.085px;">Оптимизация</div>
<svg style="left:1320.5px;top:31px" width="15" height="14" viewBox="0 0 17 14"><path d="M2.6 0.3 V13.7 M8 0.3 V13.7 M13.4 0.3 V13.7" stroke="#000" stroke-width="1.4"/><path d="M0.4 11 H4.8 M5.8 3.2 H10.2 M11.2 7.4 H15.8" stroke="#000" stroke-width="1.9"/></svg>
<div style="left:1443.5px;top:26px;width:113.20000000000005px;height:22px;background:linear-gradient(#efefef,#e6e6e6);border-radius:4px 0 0 0;border-right:1.6px solid #2a2a2a;border-left:1px solid #fbfbfb;border-top:1px solid #f6f6f6"></div>
<div class="t" style="left:1470.3px;top:31px;line-height:14px;height:14px;color:#1a1a1a;letter-spacing:-0.052px;">Параметры</div>
<svg style="left:1449.0px;top:31px" width="14" height="14" viewBox="-7 -7 14 14"><circle r="3.6" fill="none" stroke="#111" stroke-width="2.4"/><rect x="-1.1" y="-6.8" width="2.2" height="2.6" fill="#111" transform="rotate(0)"/><rect x="-1.1" y="-6.8" width="2.2" height="2.6" fill="#111" transform="rotate(45)"/><rect x="-1.1" y="-6.8" width="2.2" height="2.6" fill="#111" transform="rotate(90)"/><rect x="-1.1" y="-6.8" width="2.2" height="2.6" fill="#111" transform="rotate(135)"/><rect x="-1.1" y="-6.8" width="2.2" height="2.6" fill="#111" transform="rotate(180)"/><rect x="-1.1" y="-6.8" width="2.2" height="2.6" fill="#111" transform="rotate(225)"/><rect x="-1.1" y="-6.8" width="2.2" height="2.6" fill="#111" transform="rotate(270)"/><rect x="-1.1" y="-6.8" width="2.2" height="2.6" fill="#111" transform="rotate(315)"/></svg>
<div style="left:1559.4px;top:26px;width:70.29999999999995px;height:22px;background:linear-gradient(#efefef,#e6e6e6);border-radius:4px 0 0 0;border-right:1.6px solid #2a2a2a;border-left:1px solid #fbfbfb;border-top:1px solid #f6f6f6"></div>
<div class="t" style="left:1587.5px;top:31px;line-height:14px;height:14px;color:#1a1a1a;letter-spacing:0.021px;">Лог</div>
<svg style="left:1564.9px;top:32px" width="15" height="12" fill="#111"><rect x="0" y="0.0" width="2.2" height="1.8"/><rect x="3.8" y="0.0" width="10.4" height="1.8"/><rect x="0" y="3.2" width="2.2" height="1.8"/><rect x="3.8" y="3.2" width="10.4" height="1.8"/><rect x="0" y="6.4" width="2.2" height="1.8"/><rect x="3.8" y="6.4" width="10.4" height="1.8"/><rect x="0" y="9.600000000000001" width="2.2" height="1.8"/><rect x="3.8" y="9.600000000000001" width="10.4" height="1.8"/></svg>
<div style="left:1632.4px;top:26px;width:66.19999999999982px;height:22px;background:linear-gradient(#efefef,#e6e6e6);border-radius:4px 0 0 0;border-right:1.6px solid #2a2a2a;border-left:1px solid #fbfbfb;border-top:1px solid #f6f6f6"></div>
<div class="t" style="left:1658.9px;top:31px;line-height:14px;height:14px;color:#1a1a1a;letter-spacing:-0.156px;">Доход</div>
<svg style="left:1637.9px;top:30px" width="15" height="15" viewBox="0 0 15 15"><path d="M0.6 9 L4.4 5.2 L7.2 7.6 L12.6 1.8" fill="none" stroke="#111" stroke-width="1.6"/><polygon points="10,0.6 14.4,0.4 14,4.8" fill="#111"/><path d="M1.6 12 V15 M5 9.6 V15 M8.4 11 V15 M11.8 7 V15" stroke="#111" stroke-width="2.2"/></svg>
<div style="left:949px;top:48px;width:939px;height:24px;background:#f2f2f2"></div>
<div style="left:949px;top:48px;width:23px;height:23px;background:#3f98f7"></div>
<div style="left:972px;top:48.5px;width:23px;height:22px;background:linear-gradient(#fefefe,#f3f3f3 45%,#d9d9d9);border-right:1px solid #cdcdcd;border-left:1px solid #fafafa"></div>
<div style="left:995px;top:48.5px;width:23px;height:22px;background:linear-gradient(#fefefe,#f3f3f3 45%,#d9d9d9);border-right:1px solid #cdcdcd;border-left:1px solid #fafafa"></div>
<div style="left:1018px;top:48.5px;width:23px;height:22px;background:linear-gradient(#fefefe,#f3f3f3 45%,#d9d9d9);border-right:1px solid #cdcdcd;border-left:1px solid #fafafa"></div>
<div style="left:1041px;top:48.5px;width:23px;height:22px;background:linear-gradient(#fefefe,#f3f3f3 45%,#d9d9d9);border-right:1px solid #cdcdcd;border-left:1px solid #fafafa"></div>
<div style="left:1064px;top:48.5px;width:23px;height:22px;background:linear-gradient(#fefefe,#f3f3f3 45%,#d9d9d9);border-right:1px solid #cdcdcd;border-left:1px solid #fafafa"></div>
<div style="left:1087px;top:48.5px;width:23px;height:22px;background:linear-gradient(#fefefe,#f3f3f3 45%,#d9d9d9);border-right:1px solid #cdcdcd;border-left:1px solid #fafafa"></div>
<div style="left:1110px;top:48.5px;width:23px;height:22px;background:linear-gradient(#fefefe,#f3f3f3 45%,#d9d9d9);border-right:1px solid #cdcdcd;border-left:1px solid #fafafa"></div>
<div style="left:1133px;top:48.5px;width:23px;height:22px;background:linear-gradient(#fefefe,#f3f3f3 45%,#d9d9d9);border-right:1px solid #cdcdcd;border-left:1px solid #fafafa"></div>
<div style="left:1156px;top:48.5px;width:23px;height:22px;background:linear-gradient(#fefefe,#f3f3f3 45%,#d9d9d9);border-right:1px solid #cdcdcd;border-left:1px solid #fafafa"></div>
<svg style="left:954px;top:52px" width="13" height="17" viewBox="0 0 13 17"><polygon points="1,0.6 1,13.4 4,10.6 6.4,16 8.6,15 6.2,9.8 10.6,9.8" fill="#1a1a1a"/></svg>
<svg style="left:977px;top:53px" width="14" height="14" viewBox="0 0 14 14"><path d="M7 0.6 V13.4 M0.6 7 H13.4" stroke="#000" stroke-width="1.1"/><rect x="4.8" y="4.8" width="4.4" height="4.4" fill="#fff" stroke="#000" stroke-width="1.1"/></svg>
<svg style="left:999px;top:52px" width="16" height="16"><path d="M2 2 L13.6 13.6" stroke="#000" stroke-width="1.5"/><rect x="0.4" y="0.4" width="3.2" height="3.2"/><rect x="11.8" y="11.8" width="3.4" height="3.4"/></svg>
<svg style="left:1022px;top:52px" width="16" height="16"><path d="M1 1 L15 15" stroke="#000" stroke-width="1.5"/><rect x="3.4" y="3.4" width="3.2" height="3.2"/><rect x="9.6" y="9.6" width="3.2" height="3.2"/></svg>
<svg style="left:1045px;top:52px" width="16" height="16"><path d="M2 2 L13 13" stroke="#000" stroke-width="1.5"/><rect x="0.4" y="0.4" width="3.2" height="3.2"/><polygon points="15.4,15.4 9.4,13.6 13.6,9.4"/></svg>
<svg style="left:1068px;top:58px" width="16" height="6"><path d="M0.6 3 H15.4" stroke="#000" stroke-width="1.1"/><circle cx="8" cy="3" r="1.7"/></svg>
<svg style="left:1095px;top:52px" width="7" height="16"><path d="M3.4 0.4 V15.6" stroke="#000" stroke-width="1.1"/><rect x="1.8" y="6.2" width="3.2" height="3.4" rx="1"/></svg>
<svg style="left:1113px;top:52px" width="17" height="16" viewBox="0 0 17 16"><path d="M1.4 3 H15.6 M1.4 6.6 H15.6 M1.4 10.2 H15.6 M1.4 13.8 H15.6" stroke="#000" stroke-width="1.3"/><path d="M1.4 14.6 L14.6 1.2" stroke="#000" stroke-width="1.8"/><rect x="0.4" y="12.6" width="3" height="3"/></svg>
<div class="t" style="left:1136.8px;top:45px;line-height:27px;height:27px;font-size:24px;color:#000;font-family:'Liberation Serif',serif;">T</div>
<svg style="left:1160px;top:52px" width="16" height="17" viewBox="0 0 16 17"><polygon points="0.6,0.4 0.6,12.6 3.6,10 5.8,15 7.8,14 5.6,9.2 9.6,9.2" fill="#000"/><path d="M9 8.6 H15.6 M10.6 7.4 H14" stroke="#000" stroke-width="1"/><path d="M10.4 10 V15.4 M12.3 10 V15.4 M14.2 10 V15.4 M9.6 15.6 H15" stroke="#000" stroke-width="1"/></svg>
<div style="left:1179px;top:48.5px;width:64px;height:22px;background:linear-gradient(#fff,#f4f4f4 50%,#e2e2e2);border:1.6px solid #000"></div>
<div class="t" style="left:1184.8px;top:53px;line-height:14px;height:14px;color:#111;letter-spacing:-0.432px;">Правая</div>
<svg style="left:1228.5px;top:57px" width="12" height="7"><polygon points="0.3,0.3 10.7,0.3 5.5,5.8" fill="#000"/></svg>
<div style="left:1244.4px;top:50.5px;width:19.6px;height:19px;background:#fff;border:1.3px solid #000"></div>
<div style="left:1247.3px;top:53.3px;width:14px;height:13.5px;background:#4682b4"></div>
<div class="t" style="left:1275px;top:53px;line-height:14px;height:14px;color:#333;">1</div>
<div class="t" style="left:1285px;top:53px;line-height:14px;height:14px;color:#333;">5</div>
<div class="t" style="left:1296px;top:53px;line-height:14px;height:14px;color:#333;letter-spacing:-0.930px;">15</div>
<div class="t" style="left:1311.2px;top:53px;line-height:14px;height:14px;color:#333;text-decoration:underline;letter-spacing:-0.880px;">30</div>
<div class="t" style="left:1327px;top:53px;line-height:14px;height:14px;color:#333;letter-spacing:-0.880px;">60</div>
<div class="t" style="left:1353.5px;top:53px;line-height:14px;height:14px;color:#333;letter-spacing:0.208px;">Тики</div>
<div class="t" style="left:1384.3px;top:53px;line-height:14px;height:14px;color:#333;text-decoration:underline;letter-spacing:-0.398px;">Сек</div>
<div class="t" style="left:1408.1px;top:53px;line-height:14px;height:14px;color:#333;letter-spacing:0.257px;">Мин</div>
<div class="t" style="left:1437px;top:53px;line-height:14px;height:14px;color:#333;letter-spacing:-0.056px;">Дни</div>
<div style="left:1888px;top:1px;width:2px;height:1028px;background:linear-gradient(90deg,#181b20 0 1.7px,#999 1.7px 2px)"></div>
<div style="left:9px;top:871px;width:937px;height:4px;background:#4f5b69"></div>
<div style="left:946px;top:870.7px;width:944px;height:4.3px;background:#4f5b69"></div>
<div style="left:9px;top:875px;width:1879px;height:23px;background:#e4e4e4;border-bottom:1.6px solid #6a6a6a"></div>
<div style="left:43px;top:875px;width:1px;height:22px;background:#8a8a8a"></div>
<div style="left:143px;top:875px;width:1px;height:22px;background:#8a8a8a"></div>
<div style="left:198px;top:875px;width:1px;height:22px;background:#8a8a8a"></div>
<div class="t" style="left:14.1px;top:880px;line-height:14px;height:14px;color:#111;letter-spacing:0.095px;">Тип</div>
<div class="t" style="left:48.9px;top:880px;line-height:14px;height:14px;color:#111;letter-spacing:-0.262px;">Время</div>
<div class="t" style="left:148.9px;top:880px;line-height:14px;height:14px;color:#111;letter-spacing:0.233px;">Номер</div>
<div class="t" style="left:204px;top:880px;line-height:14px;height:14px;color:#111;letter-spacing:0.121px;">Сообщение</div>
<div style="left:9px;top:898.5px;width:1879px;height:106.5px;background:#fff"></div>
<div style="left:9px;top:1005px;width:1879px;height:22px;background:linear-gradient(#fefefe,#f2f2f2 55%,#e4e4e4);border-top:1px solid #bcbcbc"></div>
<div style="left:0px;top:1027px;width:1890px;height:2px;background:#15181c"></div>
<svg style="left:20px;top:1020px" width="32" height="9"><ellipse cx="15" cy="14" rx="13.5" ry="12.5" fill="#2d5fa8" stroke="#a8c8ee" stroke-width="1.4"/></svg>
<div style="left:339.3px;top:1006px;width:1px;height:21px;background:#9a9a9a"></div>
<div style="left:341.6px;top:1006px;width:1px;height:21px;background:#9a9a9a"></div>
<div style="left:343.9px;top:1006px;width:1px;height:21px;background:#9a9a9a"></div>
<div style="left:346px;top:1005.5px;width:72px;height:21.5px;background:#3f98f7;border-radius:0 0 6px 6px"></div>
<div class="t" style="left:352.3px;top:1010px;line-height:14px;height:14px;color:#fff;text-decoration:underline;letter-spacing:0.136px;">скрипты</div>
<svg style="left:403px;top:1011px" width="12" height="9"><path d="M0.3 4.4 H4.4 M4.6 1 V8 M4.6 1.6 H11 V6.2 H4.6" stroke="#fff" stroke-width="1.2" fill="none"/><rect x="4.6" y="5" width="6.4" height="1.8" fill="#fff"/></svg>
<div style="left:419px;top:1005.5px;width:160px;height:21.5px;background:#d2d2d2;border-radius:0 0 7px 7px"></div>
<div class="t" style="left:424.6px;top:1010px;line-height:14px;height:14px;color:#111;letter-spacing:0.086px;">менеджер подключений</div>
<div style="left:579px;top:1005.5px;width:24.6px;height:21.5px;background:#4f5b69"></div>
<svg style="left:587px;top:1012px" width="9" height="9"><path d="M4.4 0.4 V8.4 M0.4 4.4 H8.4" stroke="#fff" stroke-width="1.3"/></svg>
<svg style="left:1666px;top:1011px" width="12" height="12"><rect x="0.6" y="0.6" width="10.2" height="10.2" fill="#fff" stroke="#222" stroke-width="1.1"/><path d="M2.6 5.6 L4.8 8 L8.8 3" stroke="#111" stroke-width="1.5" fill="none"/></svg>
<svg style="left:1725.2px;top:1011px" width="12" height="12"><rect x="0.6" y="0.6" width="10.2" height="10.2" fill="#fff" stroke="#222" stroke-width="1.1"/><path d="M2.6 5.6 L4.8 8 L8.8 3" stroke="#111" stroke-width="1.5" fill="none"/></svg>
<svg style="left:1786px;top:1011px" width="12" height="12"><rect x="0.6" y="0.6" width="10.2" height="10.2" fill="#fff" stroke="#222" stroke-width="1.1"/><path d="M2.6 5.6 L4.8 8 L8.8 3" stroke="#111" stroke-width="1.5" fill="none"/></svg>
<svg style="left:1681px;top:1009px" width="16" height="16"><circle cx="7.6" cy="7.6" r="7.3" fill="#3f73e8"/><circle cx="7.6" cy="7.6" r="6.2" fill="#5b8ff5"/><rect x="6.4" y="6.4" width="2.6" height="6" fill="#fff"/><circle cx="7.7" cy="3.8" r="1.5" fill="#fff"/></svg>
<svg style="left:1739px;top:1008.5px" width="19" height="16"><polygon points="9.2,1 17.6,14.8 0.8,14.8" fill="#f6e21a" stroke="#222" stroke-width="1.1" stroke-linejoin="round"/><rect x="8.3" y="5" width="1.9" height="5.4" fill="#111"/><rect x="8.3" y="11.4" width="1.9" height="1.9" fill="#111"/></svg>
<svg style="left:1800px;top:1009px" width="17" height="16"><circle cx="8" cy="7.8" r="7.4" fill="#f04a12"/><path d="M5 4.8 L11 10.8 M11 4.8 L5 10.8" stroke="#fff" stroke-width="2.3"/></svg>
<div class="t" style="left:1699.6px;top:1010px;line-height:14px;height:14px;color:#111;">0</div>
<div class="t" style="left:1761.1px;top:1010px;line-height:14px;height:14px;color:#111;">0</div>
<div class="t" style="left:1819.8px;top:1010px;line-height:14px;height:14px;color:#111;">0</div>
<div style="left:1845.4px;top:1005px;width:21.3px;height:22px;background:#fff;border-left:1px solid #111;border-right:1px solid #111"></div>
<svg style="left:1850px;top:1011px" width="13" height="11"><path d="M1 1 L6.2 5.4 L11.4 1 M1 5.6 L6.2 10 L11.4 5.6" stroke="#111" stroke-width="1.5" fill="none"/></svg>
</body></html>
